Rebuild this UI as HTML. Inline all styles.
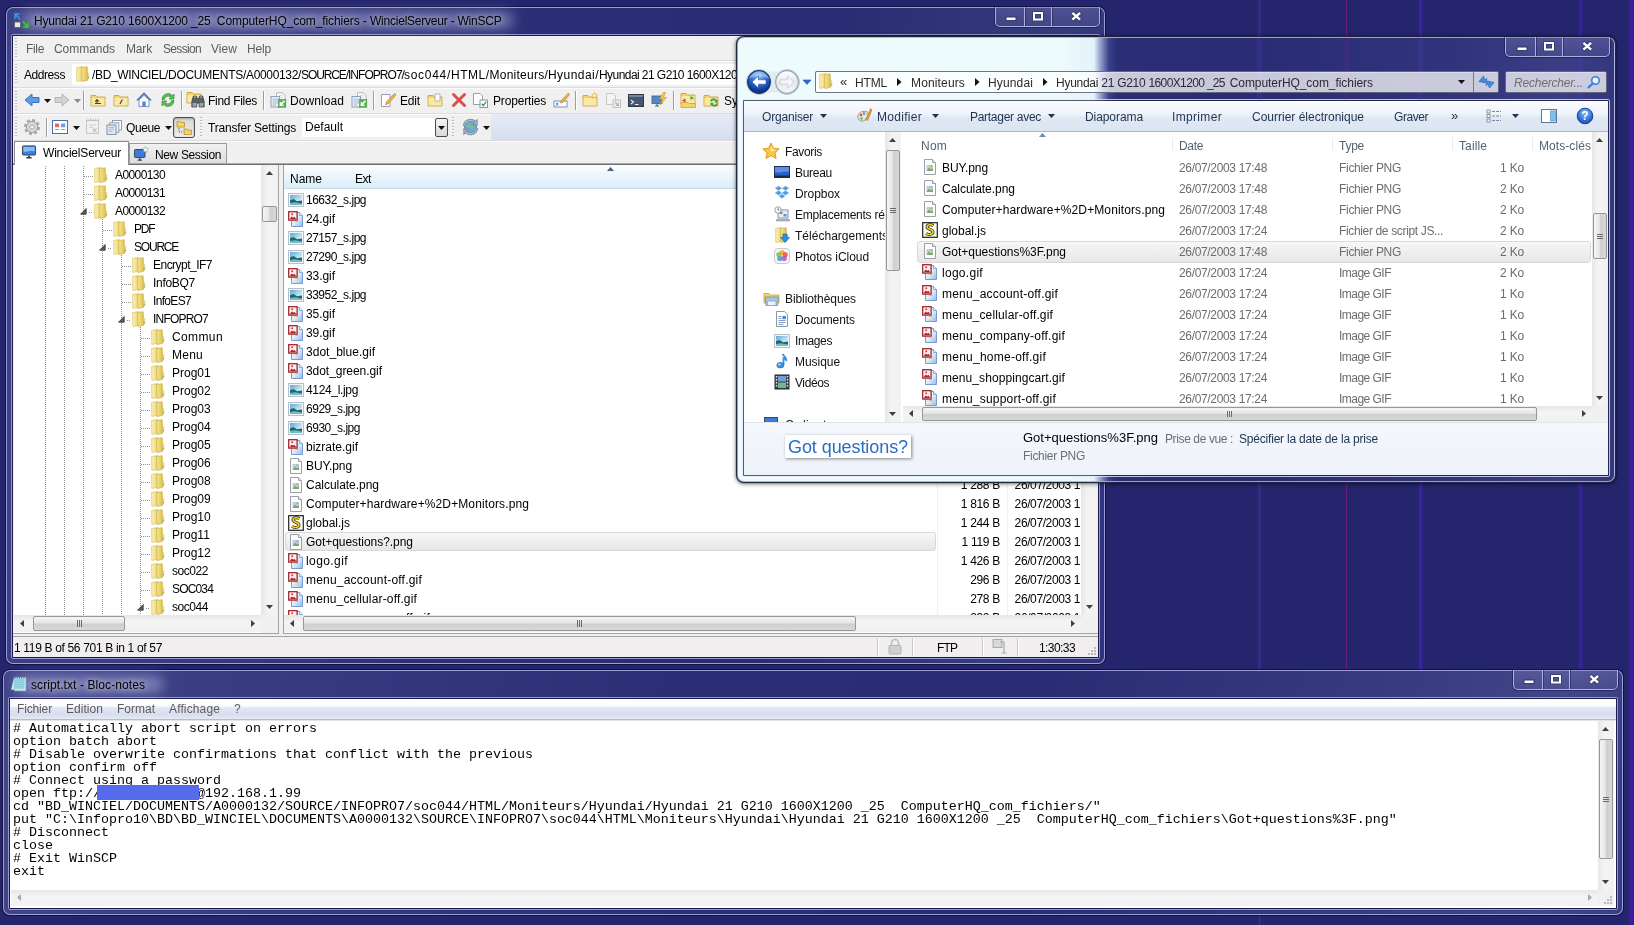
<!DOCTYPE html>
<html><head><meta charset="utf-8"><title>desktop</title><style>
html,body{margin:0;padding:0}
body{width:1634px;height:925px;overflow:hidden;position:relative;background:#24256d;font-family:"Liberation Sans",sans-serif;font-size:12px;}
div,span,svg{position:absolute;box-sizing:border-box}
.t{white-space:pre;display:block}
#root{left:0;top:0;width:1634px;height:925px;will-change:transform;overflow:hidden}
.clip{overflow:hidden}
.abs{left:0;top:0;width:1634px;height:925px}
</style></head><body><div id="root">
<div style="left:1259px;top:0px;width:1px;height:905px;background:#4526b4;"></div>
<div style="left:1346px;top:0px;width:1px;height:905px;background:#6a1f78;"></div>
<div style="left:1420px;top:0px;width:1px;height:905px;background:#4526b4;"></div>
<div style="left:1580px;top:0px;width:1px;height:905px;background:#4022a8;"></div>
<div style="left:1629px;top:0px;width:4px;height:925px;background:#3c1f9c;"></div>
<div style="left:1257px;top:0px;width:5px;height:905px;background:rgba(70,50,190,.18);"></div>
<div style="left:1418px;top:0px;width:5px;height:905px;background:rgba(70,50,190,.18);"></div>
<div style="left:1578px;top:0px;width:5px;height:905px;background:rgba(70,50,190,.18);"></div>
<div style="left:1259px;top:905px;width:1px;height:20px;background:#7a2260;"></div>
<div style="left:5px;top:6px;width:1101px;height:659px;border-radius:8px;background:#10113f;"></div>
<div style="left:6px;top:7px;width:1099px;height:657px;border-radius:7px;border:1px solid rgba(168,172,226,.88);background:linear-gradient(97deg,#3f4186 0%,#3a3c82 18%,#2c2f76 42%,#292c72 70%,#363a7e 90%,#30337a 100%);"></div>
<div style="left:11px;top:34px;width:1089px;height:625px;border-radius:2px;border:1px solid rgba(172,176,228,.8);"></div>
<div style="left:12px;top:35px;width:1087px;height:623px;border-radius:1px;background:#191a52;"></div>
<div style="left:22px;top:11px;width:492px;height:19px;border-radius:10px;background:rgba(200,204,242,.40);filter:blur(6px);"></div>
<svg style="left:13px;top:12px;" width="17" height="17" viewBox="0 0 17 17"><path d="M1 1 L7 1 L7 3 L4.5 3 L8 7 L6.5 8.3 L3 4.5 L3 7 L1 7 Z" fill="#4f8fe0" stroke="#2b5fb0" stroke-width=".6"/><path d="M16 16 L10 16 L10 14 L12.5 14 L9 10 L10.5 8.7 L14 12.5 L14 10 L16 10 Z" fill="#4fc04a" stroke="#2c8a2a" stroke-width=".6"/><rect x="1.5" y="10" width="6" height="5.5" fill="#e8e8f0" stroke="#555a70" stroke-width=".8"/><path d="M2.8 10 V8.3 a1.7 1.7 0 0 1 3.4 0 V10" fill="none" stroke="#555a70" stroke-width="1"/></svg>
<span class="t" style="top:13px;line-height:16px;font-size:12px;color:#000;letter-spacing:-0.173px;left:34px;text-shadow:0 0 6px rgba(255,255,255,.55),0 0 10px rgba(255,255,255,.4);">Hyundai 21 G210 1600X1200 _25  </span>
<span class="t" style="top:13px;line-height:16px;font-size:12px;color:#000;letter-spacing:-0.084px;left:216.8px;text-shadow:0 0 6px rgba(255,255,255,.55),0 0 10px rgba(255,255,255,.4);">ComputerHQ_com_fichiers - </span>
<span class="t" style="top:13px;line-height:16px;font-size:12px;color:#000;letter-spacing:-0.226px;left:370px;text-shadow:0 0 6px rgba(255,255,255,.55),0 0 10px rgba(255,255,255,.4);">WincielServeur - WinSCP</span>
<div style="left:995px;top:7px;width:105px;height:20px;border:1px solid rgba(190,194,235,.85);border-top:none;border-radius:0 0 5px 5px;background:linear-gradient(180deg,rgba(120,124,180,.38),rgba(95,99,160,.30));box-shadow:0 0 0 1px rgba(20,20,70,.55);"></div>
<div style="left:1024px;top:7px;width:1px;height:19px;background:rgba(190,194,235,.85);"></div>
<div style="left:1025px;top:7px;width:1px;height:19px;background:rgba(20,20,70,.45);"></div>
<div style="left:1051px;top:7px;width:1px;height:19px;background:rgba(190,194,235,.85);"></div>
<div style="left:1052px;top:7px;width:1px;height:19px;background:rgba(20,20,70,.45);"></div>
<svg style="left:1005px;top:16px;" width="13" height="6" viewBox="0 0 13 6"><rect x="1" y="1" width="10" height="3.6" fill="#fff" stroke="#33355e" stroke-width="1"/></svg>
<svg style="left:1032px;top:11px;" width="12" height="11" viewBox="0 0 12 11"><rect x="2" y="2" width="8" height="6.5" fill="none" stroke="#33355e" stroke-width="3.4"/><rect x="2" y="2" width="8" height="6.5" fill="none" stroke="#fff" stroke-width="2"/></svg>
<svg style="left:1070px;top:11px;" width="13" height="11" viewBox="0 0 13 11"><path d="M2 1.5 L10.5 9 M10.5 1.5 L2 9" stroke="#33355e" stroke-width="4" fill="none"/><path d="M2.4 1.9 L10.1 8.6 M10.1 1.9 L2.4 8.6" stroke="#fff" stroke-width="2.5" fill="none"/></svg>
<div style="left:13px;top:36px;width:1085px;height:621px;background:#f0f0f0;"></div>
<div class="clip" style="left:13px;top:36px;width:1085px;height:621px;"><div style="left:-13px;top:-36px;width:1634px;height:925px">
<div style="left:13px;top:60px;width:1085px;height:1px;background:#dcdcdc;"></div>
<div style="left:13px;top:61px;width:1085px;height:1px;background:#fbfbfb;"></div>
<div style="left:13px;top:87px;width:1085px;height:1px;background:#dcdcdc;"></div>
<div style="left:13px;top:88px;width:1085px;height:1px;background:#fbfbfb;"></div>
<div style="left:13px;top:113px;width:1085px;height:1px;background:#dcdcdc;"></div>
<div style="left:13px;top:114px;width:1085px;height:1px;background:#fbfbfb;"></div>
<div style="left:13px;top:140px;width:1085px;height:1px;background:#dcdcdc;"></div>
<div style="left:13px;top:141px;width:1085px;height:1px;background:#fbfbfb;"></div>
<div style="left:15px;top:38px;width:2px;height:20px;background:repeating-linear-gradient(180deg,#b9b9b9 0,#b9b9b9 1px,#f7f7f7 1px,#f7f7f7 2px,transparent 2px,transparent 3px);"></div>
<div style="left:15px;top:64px;width:2px;height:21px;background:repeating-linear-gradient(180deg,#b9b9b9 0,#b9b9b9 1px,#f7f7f7 1px,#f7f7f7 2px,transparent 2px,transparent 3px);"></div>
<div style="left:15px;top:91px;width:2px;height:20px;background:repeating-linear-gradient(180deg,#b9b9b9 0,#b9b9b9 1px,#f7f7f7 1px,#f7f7f7 2px,transparent 2px,transparent 3px);"></div>
<div style="left:15px;top:117px;width:2px;height:21px;background:repeating-linear-gradient(180deg,#b9b9b9 0,#b9b9b9 1px,#f7f7f7 1px,#f7f7f7 2px,transparent 2px,transparent 3px);"></div>
<div style="left:200px;top:117px;width:2px;height:21px;background:repeating-linear-gradient(180deg,#b9b9b9 0,#b9b9b9 1px,#f7f7f7 1px,#f7f7f7 2px,transparent 2px,transparent 3px);"></div>
<div style="left:452px;top:117px;width:2px;height:21px;background:repeating-linear-gradient(180deg,#b9b9b9 0,#b9b9b9 1px,#f7f7f7 1px,#f7f7f7 2px,transparent 2px,transparent 3px);"></div>
<span class="t" style="top:41px;line-height:16px;font-size:12px;color:#5c5c5c;letter-spacing:-0.336px;left:26px;">File</span>
<span class="t" style="top:41px;line-height:16px;font-size:12px;color:#5c5c5c;letter-spacing:-0.045px;left:54px;">Commands</span>
<span class="t" style="top:41px;line-height:16px;font-size:12px;color:#5c5c5c;letter-spacing:-0.168px;left:126px;">Mark</span>
<span class="t" style="top:41px;line-height:16px;font-size:12px;color:#5c5c5c;letter-spacing:-0.672px;left:163px;">Session</span>
<span class="t" style="top:41px;line-height:16px;font-size:12px;color:#5c5c5c;letter-spacing:0.051px;left:211px;">View</span>
<span class="t" style="top:41px;line-height:16px;font-size:12px;color:#5c5c5c;letter-spacing:-0.172px;left:247px;">Help</span>
<span class="t" style="top:67px;line-height:16px;font-size:12px;color:#000;letter-spacing:-0.433px;left:24px;">Address</span>
<div style="left:72px;top:64px;width:1030px;height:21px;background:#fff;"></div>
<svg style="left:75px;top:66px;" width="16" height="16" viewBox="0 0 16 16"><defs><linearGradient id="fa" x1="0" x2="1"><stop offset="0" stop-color="#fbf3c2"/><stop offset=".6" stop-color="#f2e08c"/><stop offset="1" stop-color="#e6cc62"/></linearGradient><linearGradient id="fb" x1="0" x2="1"><stop offset="0" stop-color="#f7e99e"/><stop offset=".5" stop-color="#ecd36c"/><stop offset="1" stop-color="#dcbc4c"/></linearGradient></defs><path d="M1.6 1.6 L7.4 .6 L7.6 14.4 L1.8 15.4 Z" fill="url(#fa)" stroke="#dcc45e" stroke-width=".7"/><path d="M6.6 1.4 L12.2 .8 L12.8 14.2 L7 15.6 Z" fill="url(#fb)" stroke="#cfb24a" stroke-width=".7"/><path d="M12.4 7.4 L13.8 7.8 L13.8 12.6 L12.6 12.8 Z" fill="#efe2a4" stroke="#cdb55a" stroke-width=".5"/><rect x="12.7" y="10.8" width=".9" height="1.6" fill="#6faa58"/></svg>
<span class="t" style="top:67px;line-height:16px;font-size:12px;color:#000;letter-spacing:-0.335px;left:92px;">/BD_WINCIEL/</span>
<span class="t" style="top:67px;line-height:16px;font-size:12px;color:#000;letter-spacing:-0.267px;left:168px;">DOCUMENTS/</span>
<span class="t" style="top:67px;line-height:16px;font-size:12px;color:#000;letter-spacing:-0.340px;left:246px;">A0000132/</span>
<span class="t" style="top:67px;line-height:16px;font-size:12px;color:#000;letter-spacing:-1.098px;left:301px;">SOURCE/</span>
<span class="t" style="top:67px;line-height:16px;font-size:12px;color:#000;letter-spacing:-0.965px;left:348px;">INFOPRO7/</span>
<span class="t" style="top:67px;line-height:16px;font-size:12px;color:#000;letter-spacing:0.710px;left:404px;">soc044/</span>
<span class="t" style="top:67px;line-height:16px;font-size:12px;color:#000;letter-spacing:0.500px;left:451px;">HTML/</span>
<span class="t" style="top:67px;line-height:16px;font-size:12px;color:#000;letter-spacing:0.247px;left:489.5px;">Moniteurs/</span>
<span class="t" style="top:67px;line-height:16px;font-size:12px;color:#000;letter-spacing:0.453px;left:548px;">Hyundai/</span>
<span class="t" style="top:67px;line-height:16px;font-size:12px;color:#000;letter-spacing:-0.561px;left:599px;">Hyundai 21 G210 1600X120</span>
<span class="t" style="top:67px;line-height:16px;font-size:12px;color:#000;left:737px;">0 _25  ComputerHQ_com_fichiers</span>
<svg style="left:24px;top:92px;" width="16" height="16" viewBox="0 0 16 16"><path d="M1 8 L8 2 V5.5 H15 V10.5 H8 V14 Z" fill="#5c9be6" stroke="#2f6cc0" stroke-width=".9"/></svg>
<svg style="left:44px;top:99px;" width="7" height="4" viewBox="0 0 7 4"><path d="M0 0 H7 L3.5 4 Z" fill="#111"/></svg>
<svg style="left:54px;top:92px;" width="16" height="16" viewBox="0 0 16 16"><path d="M15 8 L8 2 V5.5 H1 V10.5 H8 V14 Z" fill="#d2d2d2" stroke="#b0b0b0" stroke-width=".9"/></svg>
<svg style="left:74px;top:99px;" width="7" height="4" viewBox="0 0 7 4"><path d="M0 0 H7 L3.5 4 Z" fill="#8a8a8a"/></svg>
<div style="left:83px;top:91px;width:1px;height:19px;background:#9d9d9d;"></div>
<div style="left:84px;top:91px;width:1px;height:19px;background:#fff;"></div>
<svg style="left:90px;top:92px;" width="16" height="16" viewBox="0 0 16 16"><path d="M1 3.5 H6 L7.5 5 H15 V14 H1 Z" fill="#f3d36b" stroke="#c9a53a" stroke-width=".9"/><path d="M1.6 6 H14.4 V13.4 H1.6 Z" fill="#fae9a6"/><path d="M5 11.5 H11 M7 11.5 V8 M5.3 9.6 L7 7.6 L8.7 9.6" stroke="#444" stroke-width="1.1" fill="none"/></svg>
<svg style="left:113px;top:92px;" width="16" height="16" viewBox="0 0 16 16"><path d="M1 3.5 H6 L7.5 5 H15 V14 H1 Z" fill="#f3d36b" stroke="#c9a53a" stroke-width=".9"/><path d="M1.6 6 H14.4 V13.4 H1.6 Z" fill="#fae9a6"/><path d="M9.3 7.4 L7 12" stroke="#444" stroke-width="1.2"/></svg>
<svg style="left:136px;top:92px;" width="16" height="16" viewBox="0 0 16 16"><path d="M1 8.5 L8 1.5 L15 8.5" fill="none" stroke="#4a78b8" stroke-width="1.6"/><path d="M3 8 L8 3.3 L13 8 V14.5 H3 Z" fill="#fbfbfb" stroke="#6d8fbe" stroke-width=".9"/><rect x="6.4" y="9.5" width="3.2" height="5" fill="#4f83c8"/></svg>
<svg style="left:160px;top:92px;" width="16" height="16" viewBox="0 0 16 16"><path d="M2 7.5 A6 6 0 0 1 12.5 3.6 L14 2 V7 H9 L10.8 5.2 A3.8 3.8 0 0 0 4.4 7.5 Z" fill="#5bbf58" stroke="#2f8f33" stroke-width=".7"/><path d="M14 8.5 A6 6 0 0 1 3.5 12.4 L2 14 V9 H7 L5.2 10.8 A3.8 3.8 0 0 0 11.6 8.5 Z" fill="#5bbf58" stroke="#2f8f33" stroke-width=".7"/></svg>
<div style="left:181px;top:91px;width:1px;height:19px;background:#9d9d9d;"></div>
<div style="left:182px;top:91px;width:1px;height:19px;background:#fff;"></div>
<svg style="left:186px;top:89px;" width="16" height="16" viewBox="0 0 16 16"><path d="M1 3.5 H6 L7.5 5 H15 V14 H1 Z" fill="#f3d36b" stroke="#c9a53a" stroke-width=".9"/><path d="M1.6 6 H14.4 V13.4 H1.6 Z" fill="#fae9a6"/></svg>
<svg style="left:190px;top:93px;" width="16" height="15" viewBox="0 0 16 15"><path d="M3.4 3 h3 l.8 2.5 h1.6 l.8 -2.5 h3 l1.6 5.5 v5.5 h-5 v-4 h-2.4 v4 h-5 v-5.5 Z" fill="#5b5f66" stroke="#33363b" stroke-width=".7"/><path d="M2.6 10 h3.8 v3.4 h-3.8 Z M9.6 10 h3.8 v3.4 h-3.8 Z" fill="#9da3ab"/><path d="M4 4 h1.8 M10.2 4 h1.8" stroke="#c9ced4" stroke-width="1"/></svg>
<span class="t" style="top:93px;line-height:16px;font-size:12px;color:#000;letter-spacing:-0.302px;left:208px;">Find Files</span>
<div style="left:263px;top:91px;width:1px;height:19px;background:#9d9d9d;"></div>
<div style="left:264px;top:91px;width:1px;height:19px;background:#fff;"></div>
<svg style="left:270px;top:92px;" width="17" height="16" viewBox="0 0 17 16"><path d="M6.5 .8 H12.5 L15 3.3 V9 H6.5 Z" fill="#fff" stroke="#9aa5b2" stroke-width=".8"/><path d="M8.5 3.6 h4.5 M8.5 5.4 h4.5" stroke="#c3cad3" stroke-width=".8"/><rect x="1" y="4.5" width="8.5" height="10.5" fill="#eef3f8" stroke="#7f97b8" stroke-width=".9"/><path d="M2.6 7 h5.4 M2.6 9 h5.4 M2.6 11 h5.4 M2.6 13 h3.6" stroke="#8aa3c4" stroke-width=".8"/><rect x="8.6" y="7.6" width="7.2" height="7.6" fill="#5ab556" stroke="#3c8f3a" stroke-width=".6"/><path d="M14.6 8.8 L11 12.4 M10.4 10.2 V13.2 H13.4" fill="none" stroke="#fff" stroke-width="1.5"/></svg>
<span class="t" style="top:93px;line-height:16px;font-size:12px;color:#000;letter-spacing:0.078px;left:290px;">Download</span>
<svg style="left:351px;top:92px;" width="17" height="16" viewBox="0 0 17 16"><path d="M6.5 .8 H12.5 L15 3.3 V9 H6.5 Z" fill="#fff" stroke="#9aa5b2" stroke-width=".8"/><path d="M8.5 3.6 h4.5 M8.5 5.4 h4.5" stroke="#c3cad3" stroke-width=".8"/><rect x="1" y="4.5" width="8.5" height="10.5" fill="#eef3f8" stroke="#7f97b8" stroke-width=".9"/><path d="M2.6 7 h5.4 M2.6 9 h5.4 M2.6 11 h5.4 M2.6 13 h3.6" stroke="#8aa3c4" stroke-width=".8"/><rect x="8.6" y="7.6" width="7.2" height="7.6" fill="#5ab556" stroke="#3c8f3a" stroke-width=".6"/><path d="M14.6 8.8 L11 12.4 M10.4 10.2 V13.2 H13.4" fill="none" stroke="#fff" stroke-width="1.5"/></svg>
<div style="left:373px;top:91px;width:1px;height:19px;background:#9d9d9d;"></div>
<div style="left:374px;top:91px;width:1px;height:19px;background:#fff;"></div>
<svg style="left:380px;top:92px;" width="16" height="16" viewBox="0 0 16 16"><path d="M1.5 2.5 H10 V14.5 H1.5 Z" fill="#fff" stroke="#9aa3ad"/><path d="M14.6 1.4 L6.6 9.8 L5.6 12.6 L8.4 11.6 L15.9 3 Z" fill="#f0b64a" stroke="#b97820" stroke-width=".7"/></svg>
<span class="t" style="top:93px;line-height:16px;font-size:12px;color:#000;letter-spacing:-0.172px;left:400px;">Edit</span>
<svg style="left:427px;top:92px;" width="16" height="16" viewBox="0 0 16 16"><path d="M1 3.5 H6 L7.5 5 H15 V14 H1 Z" fill="#f3d36b" stroke="#c9a53a" stroke-width=".9"/><path d="M1.6 6 H14.4 V13.4 H1.6 Z" fill="#fae9a6"/><path d="M8 2 H13 V9 H8 Z" fill="#fff" stroke="#9aa3ad" stroke-width=".8"/></svg>
<svg style="left:451px;top:92px;" width="16" height="16" viewBox="0 0 16 16"><path d="M2.5 2.5 L13.5 13.5 M13.5 2.5 L2.5 13.5" stroke="#d9504a" stroke-width="3" stroke-linecap="round"/></svg>
<svg style="left:472px;top:92px;" width="17" height="16" viewBox="0 0 17 16"><path d="M1.5 1.5 H8 L10.5 4 V12.5 H1.5 Z" fill="#fff" stroke="#8c97a5" stroke-width=".9"/><rect x="8" y="8" width="7.5" height="7.5" fill="#fff" stroke="#7b8aa8" stroke-width=".9"/><path d="M9.6 11.8 L11.4 13.6 L14.2 9.6" fill="none" stroke="#3fa044" stroke-width="1.4"/></svg>
<span class="t" style="top:93px;line-height:16px;font-size:12px;color:#000;letter-spacing:-0.170px;left:493px;">Properties</span>
<svg style="left:553px;top:92px;" width="17" height="16" viewBox="0 0 17 16"><rect x="1" y="9" width="13" height="6" fill="#fff" stroke="#6f87b8" stroke-width=".9"/><path d="M3 10.6 L5.4 13.6 M5.4 10.6 L3 13.6" stroke="#3d6ac0" stroke-width=".9"/><path d="M15.2 1.2 L8.4 8.6 L7.6 11 L10 10.2 L16.4 2.8 Z" fill="#f0b64a" stroke="#b97820" stroke-width=".7"/></svg>
<div style="left:575px;top:91px;width:1px;height:19px;background:#9d9d9d;"></div>
<div style="left:576px;top:91px;width:1px;height:19px;background:#fff;"></div>
<svg style="left:582px;top:92px;" width="16" height="16" viewBox="0 0 16 16"><path d="M1 3.5 H6 L7.5 5 H15 V14 H1 Z" fill="#f3d36b" stroke="#c9a53a" stroke-width=".9"/><path d="M1.6 6 H14.4 V13.4 H1.6 Z" fill="#fae9a6"/><path d="M12.5 0.5 l.9 2 2 .3 -1.5 1.4 .4 2 -1.8 -1 -1.8 1 .4 -2 -1.5 -1.4 2 -.3 Z" fill="#fff7c8" stroke="#d9a520" stroke-width=".6"/></svg>
<svg style="left:605px;top:92px;" width="17" height="16" viewBox="0 0 17 16"><path d="M1.5 1.5 H8 L10.5 4 V12.5 H1.5 Z" fill="#f4f4f4" stroke="#c3c3c3" stroke-width=".9"/><rect x="8" y="8" width="7.5" height="7.5" fill="#ececec" stroke="#bdbdbd" stroke-width=".9"/><path d="M10 10 L13.5 13.5 M13.5 10.8 V13.5 H10.8" fill="none" stroke="#b5b5b5" stroke-width="1.1"/></svg>
<svg style="left:628px;top:92px;" width="16" height="16" viewBox="0 0 16 16"><rect x=".5" y="2.5" width="15" height="12" fill="#46566c" stroke="#2c3848"/><rect x="1" y="3" width="14" height="2" fill="#7286a2"/><path d="M3 8 L5.5 10 L3 12 M7 12.5 H10.5" stroke="#e8eef8" stroke-width="1.1" fill="none"/></svg>
<svg style="left:651px;top:92px;" width="17" height="16" viewBox="0 0 17 16"><rect x="1" y="4" width="10" height="7.5" fill="#4f86d0" stroke="#5a6478" stroke-width=".9"/><path d="M4 14 H8 M6 11.5 V14" stroke="#5a6478" stroke-width="1.2"/><path d="M12.5 0.5 L8.5 7 H11.5 L9 13 L15.5 5.5 H12.2 L14.6 .5 Z" fill="#f7d048" stroke="#b98a1a" stroke-width=".6"/></svg>
<div style="left:673px;top:91px;width:1px;height:19px;background:#9d9d9d;"></div>
<div style="left:674px;top:91px;width:1px;height:19px;background:#fff;"></div>
<svg style="left:680px;top:90px;" width="16" height="16" viewBox="0 0 16 16"><path d="M1 3.5 H6 L7.5 5 H15 V14 H1 Z" fill="#f3d36b" stroke="#c9a53a" stroke-width=".9"/><path d="M1.6 6 H14.4 V13.4 H1.6 Z" fill="#fae9a6"/></svg>
<svg style="left:680px;top:93px;" width="17" height="15" viewBox="0 0 17 15"><path d="M1 9.5 H8 L9 10.5 H15.5 V14.5 H1 Z" fill="#f3d36b" stroke="#c9a53a" stroke-width=".8"/><path d="M10.5 3 L14 5 L10.5 7 Z" fill="#3fa044"/><path d="M5.5 5.5 L2 7.5 L5.5 9.5 Z" fill="#d83a34"/></svg>
<svg style="left:703px;top:92px;" width="16" height="16" viewBox="0 0 16 16"><path d="M1 3.5 H6 L7.5 5 H15 V14 H1 Z" fill="#f3d36b" stroke="#c9a53a" stroke-width=".9"/><path d="M1.6 6 H14.4 V13.4 H1.6 Z" fill="#fae9a6"/><path d="M7 9 A3.6 3.6 0 0 1 13.5 8 L14.6 7 V10.4 H11.2 L12.4 9.2 A2.2 2.2 0 0 0 8.6 9.6 Z" fill="#3fa044"/><path d="M15 11.5 A3.6 3.6 0 0 1 8.5 13 L7.4 14 V10.8 H10.8 L9.6 12 A2.2 2.2 0 0 0 13.4 11.2 Z" fill="#3fa044"/></svg>
<span class="t" style="top:93px;line-height:16px;font-size:12px;color:#000;left:724px;">Synchronize</span>
<div style="left:491px;top:114px;width:607px;height:26px;background:linear-gradient(180deg,#e6ebf6,#d6deef);"></div>
<svg style="left:23px;top:118px;" width="18" height="18" viewBox="0 0 18 18"><circle cx="9" cy="9" r="6.6" fill="none" stroke="#a4aab0" stroke-width="3" stroke-dasharray="2.9 2.28"/><circle cx="9" cy="9" r="5.6" fill="#d6dade" stroke="#969ca3" stroke-width="1"/><circle cx="9" cy="9" r="2.2" fill="#f2f2f2" stroke="#969ca3" stroke-width=".9"/></svg>
<div style="left:46px;top:118px;width:1px;height:19px;background:#9d9d9d;"></div>
<div style="left:47px;top:118px;width:1px;height:19px;background:#fff;"></div>
<svg style="left:52px;top:119px;" width="17" height="16" viewBox="0 0 17 16"><rect x=".5" y="1.5" width="15" height="13" fill="#fff" stroke="#4f6ea8"/><rect x="3" y="4.6" width="4.2" height="3.6" fill="#de6a64"/><rect x="9" y="4.6" width="4.2" height="3.6" fill="#6a9be0"/><path d="M3 10.5 h4.2 M9 10.5 h4.2" stroke="#8da2c8" stroke-width="1.2"/></svg>
<svg style="left:73px;top:126px;" width="7" height="4" viewBox="0 0 7 4"><path d="M0 0 H7 L3.5 4 Z" fill="#111"/></svg>
<svg style="left:85px;top:118px;" width="15" height="17" viewBox="0 0 15 17"><rect x="1.5" y="2.5" width="12" height="13" fill="#f1f1f1" stroke="#c4c4c4"/><path d="M3 2.5 v-2 M5.5 2.5 v-2 M8 2.5 v-2 M10.5 2.5 v-2 M13 2.5 v-2" stroke="#bdbdbd" stroke-width=".8"/><path d="M4 7 h7 M4 9.5 h4" stroke="#cfcfcf" stroke-width="1"/><path d="M8 10.5 L11.5 14 M11.5 10.5 L8 14" stroke="#c2c2c2" stroke-width="1.3"/></svg>
<svg style="left:106px;top:119px;" width="17" height="16" viewBox="0 0 17 16"><rect x="6.5" y="1.5" width="9" height="9.5" fill="#fff" stroke="#8796ad" stroke-width=".9"/><rect x="3.8" y="3.8" width="9" height="9.5" fill="#f2f5f9" stroke="#8796ad" stroke-width=".9"/><rect x="1" y="6" width="9" height="9.5" fill="#e3e9f1" stroke="#7a8aa3" stroke-width=".9"/><path d="M2.6 8.4 h5.6 M2.6 10.4 h5.6 M2.6 12.4 h4" stroke="#98a6b9" stroke-width=".7"/></svg>
<span class="t" style="top:120px;line-height:16px;font-size:12px;color:#000;letter-spacing:-0.406px;left:126px;">Queue</span>
<svg style="left:165px;top:126px;" width="7" height="4" viewBox="0 0 7 4"><path d="M0 0 H7 L3.5 4 Z" fill="#111"/></svg>
<div style="left:173px;top:117px;width:22px;height:21px;border:1px solid #4d4d4d;border-radius:3px;background:linear-gradient(180deg,#d8d8d8,#ececec);box-shadow:inset 0 1px 2px rgba(0,0,0,.25);"></div>
<svg style="left:176px;top:119px;" width="17" height="17" viewBox="0 0 17 17"><path d="M1 2.5 H4 L5 3.5 H8.5 V8 H1 Z" fill="#f3d36b" stroke="#b9932a" stroke-width=".8"/><path d="M8 10 H11 L12 11 H15.5 V15.5 H8 Z" fill="#f3d36b" stroke="#b9932a" stroke-width=".8"/><path d="M3 9 V13 H7" fill="none" stroke="#555" stroke-width=".9" stroke-dasharray="1 1"/></svg>
<span class="t" style="top:120px;line-height:16px;font-size:12px;color:#000;letter-spacing:-0.173px;left:208px;">Transfer Settings</span>
<div style="left:302px;top:118px;width:146px;height:19px;background:#fff;"></div>
<span class="t" style="top:119px;line-height:16px;font-size:12px;color:#000;letter-spacing:-0.004px;left:305px;">Default</span>
<div style="left:435px;top:118px;width:13px;height:19px;border:1px solid #4a4a4a;border-radius:2px;background:linear-gradient(180deg,#f4f4f4,#d9d9d9);"></div>
<svg style="left:438px;top:126px;" width="7" height="4" viewBox="0 0 7 4"><path d="M0 0 H7 L3.5 4 Z" fill="#111"/></svg>
<svg style="left:462px;top:118px;" width="18" height="18" viewBox="0 0 18 18"><circle cx="8.5" cy="9" r="6" fill="#6fa8dc" stroke="#4d7eb5" stroke-width=".8"/><path d="M4.5 6.5 C6.5 5 8 7.5 10 6.5 C12 5.5 12.5 8.5 11 10 C9.5 11.5 7 10 5.5 12" fill="#7cc47a" stroke="none" opacity=".85"/><path d="M1.5 8 A7 7 0 0 1 13.5 3.6 L15 2.2 V7 H10.4 L12 5.4" fill="none" stroke="#8a96a6" stroke-width="1.5"/><path d="M15.5 10 A7 7 0 0 1 3.5 14.4 L2 15.8 V11 H6.6 L5 12.6" fill="none" stroke="#8a96a6" stroke-width="1.5"/></svg>
<svg style="left:483px;top:126px;" width="7" height="4" viewBox="0 0 7 4"><path d="M0 0 H7 L3.5 4 Z" fill="#111"/></svg>
<div style="left:13px;top:163px;width:1085px;height:1px;background:#a9a9a9;"></div>
<div style="left:13px;top:164px;width:1085px;height:1px;background:#6f6f6f;"></div>
<div style="left:14px;top:141px;width:115px;height:24px;background:#fff;border:1px solid #8e8e8e;border-bottom:none;"></div>
<svg style="left:21px;top:145px;" width="16" height="14" viewBox="0 0 18 16"><rect x="1.5" y="1" width="15" height="10.5" rx="1" fill="#3f7fdc" stroke="#3a4454" stroke-width="1.1"/><path d="M2.6 2.2 H15.4 V7.5 C10 5 7 9 2.6 7.5 Z" fill="#8cbcf2"/><path d="M6 14.5 H12 M9 12 V14.5" stroke="#2d3646" stroke-width="1.8"/></svg>
<span class="t" style="top:145px;line-height:16px;font-size:12px;color:#000;letter-spacing:-0.193px;left:43px;">WincielServeur</span>
<div style="left:129px;top:143px;width:98px;height:20px;background:linear-gradient(180deg,#f1f1f1,#dedede);border:1px solid #9a9a9a;border-bottom:none;"></div>
<svg style="left:133px;top:146px;" width="17" height="15" viewBox="0 0 19 17"><rect x="1.5" y="4" width="12" height="9" rx="1" fill="#3f7ad6" stroke="#3a4558" stroke-width="1.1"/><path d="M5 16 H10 M7.5 13 V16" stroke="#3a4558" stroke-width="1.6"/><path d="M14 0.5 l1 2.3 2.4 .3 -1.8 1.6 .5 2.4 -2.1 -1.2 -2.1 1.2 .5 -2.4 -1.8 -1.6 2.4 -.3 Z" fill="#fff" stroke="#8a93a6" stroke-width=".6"/></svg>
<span class="t" style="top:147px;line-height:16px;font-size:12px;color:#000;letter-spacing:-0.366px;left:155px;">New Session</span>
</div></div>
<div style="left:14px;top:165px;width:265px;height:468px;background:#fff;"></div>
<div class="clip" style="left:14px;top:165px;width:246px;height:450px;"><div style="left:-14px;top:-165px;width:1634px;height:925px">
<div style="left:45px;top:166px;width:1px;height:449px;background:repeating-linear-gradient(180deg,#8f8f8f 0,#8f8f8f 1px,transparent 1px,transparent 2px);"></div>
<div style="left:64px;top:166px;width:1px;height:449px;background:repeating-linear-gradient(180deg,#8f8f8f 0,#8f8f8f 1px,transparent 1px,transparent 2px);"></div>
<div style="left:83px;top:166px;width:1px;height:449px;background:repeating-linear-gradient(180deg,#8f8f8f 0,#8f8f8f 1px,transparent 1px,transparent 2px);"></div>
<div style="left:102px;top:219px;width:1px;height:396px;background:repeating-linear-gradient(180deg,#8f8f8f 0,#8f8f8f 1px,transparent 1px,transparent 2px);"></div>
<div style="left:121px;top:255px;width:1px;height:360px;background:repeating-linear-gradient(180deg,#8f8f8f 0,#8f8f8f 1px,transparent 1px,transparent 2px);"></div>
<div style="left:140px;top:327px;width:1px;height:288px;background:repeating-linear-gradient(180deg,#8f8f8f 0,#8f8f8f 1px,transparent 1px,transparent 2px);"></div>
<div style="left:84px;top:176px;width:9px;height:1px;background:repeating-linear-gradient(90deg,#8f8f8f 0,#8f8f8f 1px,transparent 1px,transparent 2px);"></div>
<svg style="left:93px;top:167px;" width="16" height="16" viewBox="0 0 16 16"><defs><linearGradient id="fa" x1="0" x2="1"><stop offset="0" stop-color="#fbf3c2"/><stop offset=".6" stop-color="#f2e08c"/><stop offset="1" stop-color="#e6cc62"/></linearGradient><linearGradient id="fb" x1="0" x2="1"><stop offset="0" stop-color="#f7e99e"/><stop offset=".5" stop-color="#ecd36c"/><stop offset="1" stop-color="#dcbc4c"/></linearGradient></defs><path d="M1.6 1.6 L7.4 .6 L7.6 14.4 L1.8 15.4 Z" fill="url(#fa)" stroke="#dcc45e" stroke-width=".7"/><path d="M6.6 1.4 L12.2 .8 L12.8 14.2 L7 15.6 Z" fill="url(#fb)" stroke="#cfb24a" stroke-width=".7"/><path d="M12.4 7.4 L13.8 7.8 L13.8 12.6 L12.6 12.8 Z" fill="#efe2a4" stroke="#cdb55a" stroke-width=".5"/><rect x="12.7" y="10.8" width=".9" height="1.6" fill="#6faa58"/></svg>
<span class="t" style="top:167px;line-height:16px;font-size:12px;color:#000;letter-spacing:-0.592px;left:115px;">A0000130</span>
<div style="left:84px;top:194px;width:9px;height:1px;background:repeating-linear-gradient(90deg,#8f8f8f 0,#8f8f8f 1px,transparent 1px,transparent 2px);"></div>
<svg style="left:93px;top:185px;" width="16" height="16" viewBox="0 0 16 16"><defs><linearGradient id="fa" x1="0" x2="1"><stop offset="0" stop-color="#fbf3c2"/><stop offset=".6" stop-color="#f2e08c"/><stop offset="1" stop-color="#e6cc62"/></linearGradient><linearGradient id="fb" x1="0" x2="1"><stop offset="0" stop-color="#f7e99e"/><stop offset=".5" stop-color="#ecd36c"/><stop offset="1" stop-color="#dcbc4c"/></linearGradient></defs><path d="M1.6 1.6 L7.4 .6 L7.6 14.4 L1.8 15.4 Z" fill="url(#fa)" stroke="#dcc45e" stroke-width=".7"/><path d="M6.6 1.4 L12.2 .8 L12.8 14.2 L7 15.6 Z" fill="url(#fb)" stroke="#cfb24a" stroke-width=".7"/><path d="M12.4 7.4 L13.8 7.8 L13.8 12.6 L12.6 12.8 Z" fill="#efe2a4" stroke="#cdb55a" stroke-width=".5"/><rect x="12.7" y="10.8" width=".9" height="1.6" fill="#6faa58"/></svg>
<span class="t" style="top:185px;line-height:16px;font-size:12px;color:#000;letter-spacing:-0.592px;left:115px;">A0000131</span>
<svg style="left:80px;top:208px;" width="7" height="7" viewBox="0 0 7 7"><path d="M6.2 .5 V6.2 H.5 Z" fill="#5a5a5a" stroke="#222" stroke-width=".7"/></svg>
<div style="left:89px;top:212px;width:4px;height:1px;background:repeating-linear-gradient(90deg,#8f8f8f 0,#8f8f8f 1px,transparent 1px,transparent 2px);"></div>
<svg style="left:93px;top:203px;" width="16" height="16" viewBox="0 0 16 16"><defs><linearGradient id="fa" x1="0" x2="1"><stop offset="0" stop-color="#fbf3c2"/><stop offset=".6" stop-color="#f2e08c"/><stop offset="1" stop-color="#e6cc62"/></linearGradient><linearGradient id="fb" x1="0" x2="1"><stop offset="0" stop-color="#f7e99e"/><stop offset=".5" stop-color="#ecd36c"/><stop offset="1" stop-color="#dcbc4c"/></linearGradient></defs><path d="M1.6 1.6 L7.4 .6 L7.6 14.4 L1.8 15.4 Z" fill="url(#fa)" stroke="#dcc45e" stroke-width=".7"/><path d="M6.6 1.4 L12.2 .8 L12.8 14.2 L7 15.6 Z" fill="url(#fb)" stroke="#cfb24a" stroke-width=".7"/><path d="M12.4 7.4 L13.8 7.8 L13.8 12.6 L12.6 12.8 Z" fill="#efe2a4" stroke="#cdb55a" stroke-width=".5"/><rect x="12.7" y="10.8" width=".9" height="1.6" fill="#6faa58"/></svg>
<span class="t" style="top:203px;line-height:16px;font-size:12px;color:#000;letter-spacing:-0.592px;left:115px;">A0000132</span>
<div style="left:103px;top:230px;width:9px;height:1px;background:repeating-linear-gradient(90deg,#8f8f8f 0,#8f8f8f 1px,transparent 1px,transparent 2px);"></div>
<svg style="left:112px;top:221px;" width="16" height="16" viewBox="0 0 16 16"><defs><linearGradient id="fa" x1="0" x2="1"><stop offset="0" stop-color="#fbf3c2"/><stop offset=".6" stop-color="#f2e08c"/><stop offset="1" stop-color="#e6cc62"/></linearGradient><linearGradient id="fb" x1="0" x2="1"><stop offset="0" stop-color="#f7e99e"/><stop offset=".5" stop-color="#ecd36c"/><stop offset="1" stop-color="#dcbc4c"/></linearGradient></defs><path d="M1.6 1.6 L7.4 .6 L7.6 14.4 L1.8 15.4 Z" fill="url(#fa)" stroke="#dcc45e" stroke-width=".7"/><path d="M6.6 1.4 L12.2 .8 L12.8 14.2 L7 15.6 Z" fill="url(#fb)" stroke="#cfb24a" stroke-width=".7"/><path d="M12.4 7.4 L13.8 7.8 L13.8 12.6 L12.6 12.8 Z" fill="#efe2a4" stroke="#cdb55a" stroke-width=".5"/><rect x="12.7" y="10.8" width=".9" height="1.6" fill="#6faa58"/></svg>
<span class="t" style="top:221px;line-height:16px;font-size:12px;color:#000;letter-spacing:-1.200px;left:134px;">PDF</span>
<svg style="left:99px;top:244px;" width="7" height="7" viewBox="0 0 7 7"><path d="M6.2 .5 V6.2 H.5 Z" fill="#5a5a5a" stroke="#222" stroke-width=".7"/></svg>
<div style="left:108px;top:248px;width:4px;height:1px;background:repeating-linear-gradient(90deg,#8f8f8f 0,#8f8f8f 1px,transparent 1px,transparent 2px);"></div>
<svg style="left:112px;top:239px;" width="16" height="16" viewBox="0 0 16 16"><defs><linearGradient id="fa" x1="0" x2="1"><stop offset="0" stop-color="#fbf3c2"/><stop offset=".6" stop-color="#f2e08c"/><stop offset="1" stop-color="#e6cc62"/></linearGradient><linearGradient id="fb" x1="0" x2="1"><stop offset="0" stop-color="#f7e99e"/><stop offset=".5" stop-color="#ecd36c"/><stop offset="1" stop-color="#dcbc4c"/></linearGradient></defs><path d="M1.6 1.6 L7.4 .6 L7.6 14.4 L1.8 15.4 Z" fill="url(#fa)" stroke="#dcc45e" stroke-width=".7"/><path d="M6.6 1.4 L12.2 .8 L12.8 14.2 L7 15.6 Z" fill="url(#fb)" stroke="#cfb24a" stroke-width=".7"/><path d="M12.4 7.4 L13.8 7.8 L13.8 12.6 L12.6 12.8 Z" fill="#efe2a4" stroke="#cdb55a" stroke-width=".5"/><rect x="12.7" y="10.8" width=".9" height="1.6" fill="#6faa58"/></svg>
<span class="t" style="top:239px;line-height:16px;font-size:12px;color:#000;letter-spacing:-1.200px;left:134px;">SOURCE</span>
<div style="left:122px;top:266px;width:9px;height:1px;background:repeating-linear-gradient(90deg,#8f8f8f 0,#8f8f8f 1px,transparent 1px,transparent 2px);"></div>
<svg style="left:131px;top:257px;" width="16" height="16" viewBox="0 0 16 16"><defs><linearGradient id="fa" x1="0" x2="1"><stop offset="0" stop-color="#fbf3c2"/><stop offset=".6" stop-color="#f2e08c"/><stop offset="1" stop-color="#e6cc62"/></linearGradient><linearGradient id="fb" x1="0" x2="1"><stop offset="0" stop-color="#f7e99e"/><stop offset=".5" stop-color="#ecd36c"/><stop offset="1" stop-color="#dcbc4c"/></linearGradient></defs><path d="M1.6 1.6 L7.4 .6 L7.6 14.4 L1.8 15.4 Z" fill="url(#fa)" stroke="#dcc45e" stroke-width=".7"/><path d="M6.6 1.4 L12.2 .8 L12.8 14.2 L7 15.6 Z" fill="url(#fb)" stroke="#cfb24a" stroke-width=".7"/><path d="M12.4 7.4 L13.8 7.8 L13.8 12.6 L12.6 12.8 Z" fill="#efe2a4" stroke="#cdb55a" stroke-width=".5"/><rect x="12.7" y="10.8" width=".9" height="1.6" fill="#6faa58"/></svg>
<span class="t" style="top:257px;line-height:16px;font-size:12px;color:#000;letter-spacing:-0.518px;left:153px;">Encrypt_IF7</span>
<div style="left:122px;top:284px;width:9px;height:1px;background:repeating-linear-gradient(90deg,#8f8f8f 0,#8f8f8f 1px,transparent 1px,transparent 2px);"></div>
<svg style="left:131px;top:275px;" width="16" height="16" viewBox="0 0 16 16"><defs><linearGradient id="fa" x1="0" x2="1"><stop offset="0" stop-color="#fbf3c2"/><stop offset=".6" stop-color="#f2e08c"/><stop offset="1" stop-color="#e6cc62"/></linearGradient><linearGradient id="fb" x1="0" x2="1"><stop offset="0" stop-color="#f7e99e"/><stop offset=".5" stop-color="#ecd36c"/><stop offset="1" stop-color="#dcbc4c"/></linearGradient></defs><path d="M1.6 1.6 L7.4 .6 L7.6 14.4 L1.8 15.4 Z" fill="url(#fa)" stroke="#dcc45e" stroke-width=".7"/><path d="M6.6 1.4 L12.2 .8 L12.8 14.2 L7 15.6 Z" fill="url(#fb)" stroke="#cfb24a" stroke-width=".7"/><path d="M12.4 7.4 L13.8 7.8 L13.8 12.6 L12.6 12.8 Z" fill="#efe2a4" stroke="#cdb55a" stroke-width=".5"/><rect x="12.7" y="10.8" width=".9" height="1.6" fill="#6faa58"/></svg>
<span class="t" style="top:275px;line-height:16px;font-size:12px;color:#000;letter-spacing:-0.290px;left:153px;">InfoBQ7</span>
<div style="left:122px;top:302px;width:9px;height:1px;background:repeating-linear-gradient(90deg,#8f8f8f 0,#8f8f8f 1px,transparent 1px,transparent 2px);"></div>
<svg style="left:131px;top:293px;" width="16" height="16" viewBox="0 0 16 16"><defs><linearGradient id="fa" x1="0" x2="1"><stop offset="0" stop-color="#fbf3c2"/><stop offset=".6" stop-color="#f2e08c"/><stop offset="1" stop-color="#e6cc62"/></linearGradient><linearGradient id="fb" x1="0" x2="1"><stop offset="0" stop-color="#f7e99e"/><stop offset=".5" stop-color="#ecd36c"/><stop offset="1" stop-color="#dcbc4c"/></linearGradient></defs><path d="M1.6 1.6 L7.4 .6 L7.6 14.4 L1.8 15.4 Z" fill="url(#fa)" stroke="#dcc45e" stroke-width=".7"/><path d="M6.6 1.4 L12.2 .8 L12.8 14.2 L7 15.6 Z" fill="url(#fb)" stroke="#cfb24a" stroke-width=".7"/><path d="M12.4 7.4 L13.8 7.8 L13.8 12.6 L12.6 12.8 Z" fill="#efe2a4" stroke="#cdb55a" stroke-width=".5"/><rect x="12.7" y="10.8" width=".9" height="1.6" fill="#6faa58"/></svg>
<span class="t" style="top:293px;line-height:16px;font-size:12px;color:#000;letter-spacing:-0.672px;left:153px;">InfoES7</span>
<svg style="left:118px;top:316px;" width="7" height="7" viewBox="0 0 7 7"><path d="M6.2 .5 V6.2 H.5 Z" fill="#5a5a5a" stroke="#222" stroke-width=".7"/></svg>
<div style="left:127px;top:320px;width:4px;height:1px;background:repeating-linear-gradient(90deg,#8f8f8f 0,#8f8f8f 1px,transparent 1px,transparent 2px);"></div>
<svg style="left:131px;top:311px;" width="16" height="16" viewBox="0 0 16 16"><defs><linearGradient id="fa" x1="0" x2="1"><stop offset="0" stop-color="#fbf3c2"/><stop offset=".6" stop-color="#f2e08c"/><stop offset="1" stop-color="#e6cc62"/></linearGradient><linearGradient id="fb" x1="0" x2="1"><stop offset="0" stop-color="#f7e99e"/><stop offset=".5" stop-color="#ecd36c"/><stop offset="1" stop-color="#dcbc4c"/></linearGradient></defs><path d="M1.6 1.6 L7.4 .6 L7.6 14.4 L1.8 15.4 Z" fill="url(#fa)" stroke="#dcc45e" stroke-width=".7"/><path d="M6.6 1.4 L12.2 .8 L12.8 14.2 L7 15.6 Z" fill="url(#fb)" stroke="#cfb24a" stroke-width=".7"/><path d="M12.4 7.4 L13.8 7.8 L13.8 12.6 L12.6 12.8 Z" fill="#efe2a4" stroke="#cdb55a" stroke-width=".5"/><rect x="12.7" y="10.8" width=".9" height="1.6" fill="#6faa58"/></svg>
<span class="t" style="top:311px;line-height:16px;font-size:12px;color:#000;letter-spacing:-0.793px;left:153px;">INFOPRO7</span>
<div style="left:141px;top:338px;width:9px;height:1px;background:repeating-linear-gradient(90deg,#8f8f8f 0,#8f8f8f 1px,transparent 1px,transparent 2px);"></div>
<svg style="left:150px;top:329px;" width="16" height="16" viewBox="0 0 16 16"><defs><linearGradient id="fa" x1="0" x2="1"><stop offset="0" stop-color="#fbf3c2"/><stop offset=".6" stop-color="#f2e08c"/><stop offset="1" stop-color="#e6cc62"/></linearGradient><linearGradient id="fb" x1="0" x2="1"><stop offset="0" stop-color="#f7e99e"/><stop offset=".5" stop-color="#ecd36c"/><stop offset="1" stop-color="#dcbc4c"/></linearGradient></defs><path d="M1.6 1.6 L7.4 .6 L7.6 14.4 L1.8 15.4 Z" fill="url(#fa)" stroke="#dcc45e" stroke-width=".7"/><path d="M6.6 1.4 L12.2 .8 L12.8 14.2 L7 15.6 Z" fill="url(#fb)" stroke="#cfb24a" stroke-width=".7"/><path d="M12.4 7.4 L13.8 7.8 L13.8 12.6 L12.6 12.8 Z" fill="#efe2a4" stroke="#cdb55a" stroke-width=".5"/><rect x="12.7" y="10.8" width=".9" height="1.6" fill="#6faa58"/></svg>
<span class="t" style="top:329px;line-height:16px;font-size:12px;color:#000;letter-spacing:0.385px;left:172px;">Commun</span>
<div style="left:141px;top:356px;width:9px;height:1px;background:repeating-linear-gradient(90deg,#8f8f8f 0,#8f8f8f 1px,transparent 1px,transparent 2px);"></div>
<svg style="left:150px;top:347px;" width="16" height="16" viewBox="0 0 16 16"><defs><linearGradient id="fa" x1="0" x2="1"><stop offset="0" stop-color="#fbf3c2"/><stop offset=".6" stop-color="#f2e08c"/><stop offset="1" stop-color="#e6cc62"/></linearGradient><linearGradient id="fb" x1="0" x2="1"><stop offset="0" stop-color="#f7e99e"/><stop offset=".5" stop-color="#ecd36c"/><stop offset="1" stop-color="#dcbc4c"/></linearGradient></defs><path d="M1.6 1.6 L7.4 .6 L7.6 14.4 L1.8 15.4 Z" fill="url(#fa)" stroke="#dcc45e" stroke-width=".7"/><path d="M6.6 1.4 L12.2 .8 L12.8 14.2 L7 15.6 Z" fill="url(#fb)" stroke="#cfb24a" stroke-width=".7"/><path d="M12.4 7.4 L13.8 7.8 L13.8 12.6 L12.6 12.8 Z" fill="#efe2a4" stroke="#cdb55a" stroke-width=".5"/><rect x="12.7" y="10.8" width=".9" height="1.6" fill="#6faa58"/></svg>
<span class="t" style="top:347px;line-height:16px;font-size:12px;color:#000;letter-spacing:0.242px;left:172px;">Menu</span>
<div style="left:141px;top:374px;width:9px;height:1px;background:repeating-linear-gradient(90deg,#8f8f8f 0,#8f8f8f 1px,transparent 1px,transparent 2px);"></div>
<svg style="left:150px;top:365px;" width="16" height="16" viewBox="0 0 16 16"><defs><linearGradient id="fa" x1="0" x2="1"><stop offset="0" stop-color="#fbf3c2"/><stop offset=".6" stop-color="#f2e08c"/><stop offset="1" stop-color="#e6cc62"/></linearGradient><linearGradient id="fb" x1="0" x2="1"><stop offset="0" stop-color="#f7e99e"/><stop offset=".5" stop-color="#ecd36c"/><stop offset="1" stop-color="#dcbc4c"/></linearGradient></defs><path d="M1.6 1.6 L7.4 .6 L7.6 14.4 L1.8 15.4 Z" fill="url(#fa)" stroke="#dcc45e" stroke-width=".7"/><path d="M6.6 1.4 L12.2 .8 L12.8 14.2 L7 15.6 Z" fill="url(#fb)" stroke="#cfb24a" stroke-width=".7"/><path d="M12.4 7.4 L13.8 7.8 L13.8 12.6 L12.6 12.8 Z" fill="#efe2a4" stroke="#cdb55a" stroke-width=".5"/><rect x="12.7" y="10.8" width=".9" height="1.6" fill="#6faa58"/></svg>
<span class="t" style="top:365px;line-height:16px;font-size:12px;color:#000;left:172px;">Prog01</span>
<div style="left:141px;top:392px;width:9px;height:1px;background:repeating-linear-gradient(90deg,#8f8f8f 0,#8f8f8f 1px,transparent 1px,transparent 2px);"></div>
<svg style="left:150px;top:383px;" width="16" height="16" viewBox="0 0 16 16"><defs><linearGradient id="fa" x1="0" x2="1"><stop offset="0" stop-color="#fbf3c2"/><stop offset=".6" stop-color="#f2e08c"/><stop offset="1" stop-color="#e6cc62"/></linearGradient><linearGradient id="fb" x1="0" x2="1"><stop offset="0" stop-color="#f7e99e"/><stop offset=".5" stop-color="#ecd36c"/><stop offset="1" stop-color="#dcbc4c"/></linearGradient></defs><path d="M1.6 1.6 L7.4 .6 L7.6 14.4 L1.8 15.4 Z" fill="url(#fa)" stroke="#dcc45e" stroke-width=".7"/><path d="M6.6 1.4 L12.2 .8 L12.8 14.2 L7 15.6 Z" fill="url(#fb)" stroke="#cfb24a" stroke-width=".7"/><path d="M12.4 7.4 L13.8 7.8 L13.8 12.6 L12.6 12.8 Z" fill="#efe2a4" stroke="#cdb55a" stroke-width=".5"/><rect x="12.7" y="10.8" width=".9" height="1.6" fill="#6faa58"/></svg>
<span class="t" style="top:383px;line-height:16px;font-size:12px;color:#000;left:172px;">Prog02</span>
<div style="left:141px;top:410px;width:9px;height:1px;background:repeating-linear-gradient(90deg,#8f8f8f 0,#8f8f8f 1px,transparent 1px,transparent 2px);"></div>
<svg style="left:150px;top:401px;" width="16" height="16" viewBox="0 0 16 16"><defs><linearGradient id="fa" x1="0" x2="1"><stop offset="0" stop-color="#fbf3c2"/><stop offset=".6" stop-color="#f2e08c"/><stop offset="1" stop-color="#e6cc62"/></linearGradient><linearGradient id="fb" x1="0" x2="1"><stop offset="0" stop-color="#f7e99e"/><stop offset=".5" stop-color="#ecd36c"/><stop offset="1" stop-color="#dcbc4c"/></linearGradient></defs><path d="M1.6 1.6 L7.4 .6 L7.6 14.4 L1.8 15.4 Z" fill="url(#fa)" stroke="#dcc45e" stroke-width=".7"/><path d="M6.6 1.4 L12.2 .8 L12.8 14.2 L7 15.6 Z" fill="url(#fb)" stroke="#cfb24a" stroke-width=".7"/><path d="M12.4 7.4 L13.8 7.8 L13.8 12.6 L12.6 12.8 Z" fill="#efe2a4" stroke="#cdb55a" stroke-width=".5"/><rect x="12.7" y="10.8" width=".9" height="1.6" fill="#6faa58"/></svg>
<span class="t" style="top:401px;line-height:16px;font-size:12px;color:#000;left:172px;">Prog03</span>
<div style="left:141px;top:428px;width:9px;height:1px;background:repeating-linear-gradient(90deg,#8f8f8f 0,#8f8f8f 1px,transparent 1px,transparent 2px);"></div>
<svg style="left:150px;top:419px;" width="16" height="16" viewBox="0 0 16 16"><defs><linearGradient id="fa" x1="0" x2="1"><stop offset="0" stop-color="#fbf3c2"/><stop offset=".6" stop-color="#f2e08c"/><stop offset="1" stop-color="#e6cc62"/></linearGradient><linearGradient id="fb" x1="0" x2="1"><stop offset="0" stop-color="#f7e99e"/><stop offset=".5" stop-color="#ecd36c"/><stop offset="1" stop-color="#dcbc4c"/></linearGradient></defs><path d="M1.6 1.6 L7.4 .6 L7.6 14.4 L1.8 15.4 Z" fill="url(#fa)" stroke="#dcc45e" stroke-width=".7"/><path d="M6.6 1.4 L12.2 .8 L12.8 14.2 L7 15.6 Z" fill="url(#fb)" stroke="#cfb24a" stroke-width=".7"/><path d="M12.4 7.4 L13.8 7.8 L13.8 12.6 L12.6 12.8 Z" fill="#efe2a4" stroke="#cdb55a" stroke-width=".5"/><rect x="12.7" y="10.8" width=".9" height="1.6" fill="#6faa58"/></svg>
<span class="t" style="top:419px;line-height:16px;font-size:12px;color:#000;left:172px;">Prog04</span>
<div style="left:141px;top:446px;width:9px;height:1px;background:repeating-linear-gradient(90deg,#8f8f8f 0,#8f8f8f 1px,transparent 1px,transparent 2px);"></div>
<svg style="left:150px;top:437px;" width="16" height="16" viewBox="0 0 16 16"><defs><linearGradient id="fa" x1="0" x2="1"><stop offset="0" stop-color="#fbf3c2"/><stop offset=".6" stop-color="#f2e08c"/><stop offset="1" stop-color="#e6cc62"/></linearGradient><linearGradient id="fb" x1="0" x2="1"><stop offset="0" stop-color="#f7e99e"/><stop offset=".5" stop-color="#ecd36c"/><stop offset="1" stop-color="#dcbc4c"/></linearGradient></defs><path d="M1.6 1.6 L7.4 .6 L7.6 14.4 L1.8 15.4 Z" fill="url(#fa)" stroke="#dcc45e" stroke-width=".7"/><path d="M6.6 1.4 L12.2 .8 L12.8 14.2 L7 15.6 Z" fill="url(#fb)" stroke="#cfb24a" stroke-width=".7"/><path d="M12.4 7.4 L13.8 7.8 L13.8 12.6 L12.6 12.8 Z" fill="#efe2a4" stroke="#cdb55a" stroke-width=".5"/><rect x="12.7" y="10.8" width=".9" height="1.6" fill="#6faa58"/></svg>
<span class="t" style="top:437px;line-height:16px;font-size:12px;color:#000;left:172px;">Prog05</span>
<div style="left:141px;top:464px;width:9px;height:1px;background:repeating-linear-gradient(90deg,#8f8f8f 0,#8f8f8f 1px,transparent 1px,transparent 2px);"></div>
<svg style="left:150px;top:455px;" width="16" height="16" viewBox="0 0 16 16"><defs><linearGradient id="fa" x1="0" x2="1"><stop offset="0" stop-color="#fbf3c2"/><stop offset=".6" stop-color="#f2e08c"/><stop offset="1" stop-color="#e6cc62"/></linearGradient><linearGradient id="fb" x1="0" x2="1"><stop offset="0" stop-color="#f7e99e"/><stop offset=".5" stop-color="#ecd36c"/><stop offset="1" stop-color="#dcbc4c"/></linearGradient></defs><path d="M1.6 1.6 L7.4 .6 L7.6 14.4 L1.8 15.4 Z" fill="url(#fa)" stroke="#dcc45e" stroke-width=".7"/><path d="M6.6 1.4 L12.2 .8 L12.8 14.2 L7 15.6 Z" fill="url(#fb)" stroke="#cfb24a" stroke-width=".7"/><path d="M12.4 7.4 L13.8 7.8 L13.8 12.6 L12.6 12.8 Z" fill="#efe2a4" stroke="#cdb55a" stroke-width=".5"/><rect x="12.7" y="10.8" width=".9" height="1.6" fill="#6faa58"/></svg>
<span class="t" style="top:455px;line-height:16px;font-size:12px;color:#000;left:172px;">Prog06</span>
<div style="left:141px;top:482px;width:9px;height:1px;background:repeating-linear-gradient(90deg,#8f8f8f 0,#8f8f8f 1px,transparent 1px,transparent 2px);"></div>
<svg style="left:150px;top:473px;" width="16" height="16" viewBox="0 0 16 16"><defs><linearGradient id="fa" x1="0" x2="1"><stop offset="0" stop-color="#fbf3c2"/><stop offset=".6" stop-color="#f2e08c"/><stop offset="1" stop-color="#e6cc62"/></linearGradient><linearGradient id="fb" x1="0" x2="1"><stop offset="0" stop-color="#f7e99e"/><stop offset=".5" stop-color="#ecd36c"/><stop offset="1" stop-color="#dcbc4c"/></linearGradient></defs><path d="M1.6 1.6 L7.4 .6 L7.6 14.4 L1.8 15.4 Z" fill="url(#fa)" stroke="#dcc45e" stroke-width=".7"/><path d="M6.6 1.4 L12.2 .8 L12.8 14.2 L7 15.6 Z" fill="url(#fb)" stroke="#cfb24a" stroke-width=".7"/><path d="M12.4 7.4 L13.8 7.8 L13.8 12.6 L12.6 12.8 Z" fill="#efe2a4" stroke="#cdb55a" stroke-width=".5"/><rect x="12.7" y="10.8" width=".9" height="1.6" fill="#6faa58"/></svg>
<span class="t" style="top:473px;line-height:16px;font-size:12px;color:#000;left:172px;">Prog08</span>
<div style="left:141px;top:500px;width:9px;height:1px;background:repeating-linear-gradient(90deg,#8f8f8f 0,#8f8f8f 1px,transparent 1px,transparent 2px);"></div>
<svg style="left:150px;top:491px;" width="16" height="16" viewBox="0 0 16 16"><defs><linearGradient id="fa" x1="0" x2="1"><stop offset="0" stop-color="#fbf3c2"/><stop offset=".6" stop-color="#f2e08c"/><stop offset="1" stop-color="#e6cc62"/></linearGradient><linearGradient id="fb" x1="0" x2="1"><stop offset="0" stop-color="#f7e99e"/><stop offset=".5" stop-color="#ecd36c"/><stop offset="1" stop-color="#dcbc4c"/></linearGradient></defs><path d="M1.6 1.6 L7.4 .6 L7.6 14.4 L1.8 15.4 Z" fill="url(#fa)" stroke="#dcc45e" stroke-width=".7"/><path d="M6.6 1.4 L12.2 .8 L12.8 14.2 L7 15.6 Z" fill="url(#fb)" stroke="#cfb24a" stroke-width=".7"/><path d="M12.4 7.4 L13.8 7.8 L13.8 12.6 L12.6 12.8 Z" fill="#efe2a4" stroke="#cdb55a" stroke-width=".5"/><rect x="12.7" y="10.8" width=".9" height="1.6" fill="#6faa58"/></svg>
<span class="t" style="top:491px;line-height:16px;font-size:12px;color:#000;left:172px;">Prog09</span>
<div style="left:141px;top:518px;width:9px;height:1px;background:repeating-linear-gradient(90deg,#8f8f8f 0,#8f8f8f 1px,transparent 1px,transparent 2px);"></div>
<svg style="left:150px;top:509px;" width="16" height="16" viewBox="0 0 16 16"><defs><linearGradient id="fa" x1="0" x2="1"><stop offset="0" stop-color="#fbf3c2"/><stop offset=".6" stop-color="#f2e08c"/><stop offset="1" stop-color="#e6cc62"/></linearGradient><linearGradient id="fb" x1="0" x2="1"><stop offset="0" stop-color="#f7e99e"/><stop offset=".5" stop-color="#ecd36c"/><stop offset="1" stop-color="#dcbc4c"/></linearGradient></defs><path d="M1.6 1.6 L7.4 .6 L7.6 14.4 L1.8 15.4 Z" fill="url(#fa)" stroke="#dcc45e" stroke-width=".7"/><path d="M6.6 1.4 L12.2 .8 L12.8 14.2 L7 15.6 Z" fill="url(#fb)" stroke="#cfb24a" stroke-width=".7"/><path d="M12.4 7.4 L13.8 7.8 L13.8 12.6 L12.6 12.8 Z" fill="#efe2a4" stroke="#cdb55a" stroke-width=".5"/><rect x="12.7" y="10.8" width=".9" height="1.6" fill="#6faa58"/></svg>
<span class="t" style="top:509px;line-height:16px;font-size:12px;color:#000;left:172px;">Prog10</span>
<div style="left:141px;top:536px;width:9px;height:1px;background:repeating-linear-gradient(90deg,#8f8f8f 0,#8f8f8f 1px,transparent 1px,transparent 2px);"></div>
<svg style="left:150px;top:527px;" width="16" height="16" viewBox="0 0 16 16"><defs><linearGradient id="fa" x1="0" x2="1"><stop offset="0" stop-color="#fbf3c2"/><stop offset=".6" stop-color="#f2e08c"/><stop offset="1" stop-color="#e6cc62"/></linearGradient><linearGradient id="fb" x1="0" x2="1"><stop offset="0" stop-color="#f7e99e"/><stop offset=".5" stop-color="#ecd36c"/><stop offset="1" stop-color="#dcbc4c"/></linearGradient></defs><path d="M1.6 1.6 L7.4 .6 L7.6 14.4 L1.8 15.4 Z" fill="url(#fa)" stroke="#dcc45e" stroke-width=".7"/><path d="M6.6 1.4 L12.2 .8 L12.8 14.2 L7 15.6 Z" fill="url(#fb)" stroke="#cfb24a" stroke-width=".7"/><path d="M12.4 7.4 L13.8 7.8 L13.8 12.6 L12.6 12.8 Z" fill="#efe2a4" stroke="#cdb55a" stroke-width=".5"/><rect x="12.7" y="10.8" width=".9" height="1.6" fill="#6faa58"/></svg>
<span class="t" style="top:527px;line-height:16px;font-size:12px;color:#000;left:172px;">Prog11</span>
<div style="left:141px;top:554px;width:9px;height:1px;background:repeating-linear-gradient(90deg,#8f8f8f 0,#8f8f8f 1px,transparent 1px,transparent 2px);"></div>
<svg style="left:150px;top:545px;" width="16" height="16" viewBox="0 0 16 16"><defs><linearGradient id="fa" x1="0" x2="1"><stop offset="0" stop-color="#fbf3c2"/><stop offset=".6" stop-color="#f2e08c"/><stop offset="1" stop-color="#e6cc62"/></linearGradient><linearGradient id="fb" x1="0" x2="1"><stop offset="0" stop-color="#f7e99e"/><stop offset=".5" stop-color="#ecd36c"/><stop offset="1" stop-color="#dcbc4c"/></linearGradient></defs><path d="M1.6 1.6 L7.4 .6 L7.6 14.4 L1.8 15.4 Z" fill="url(#fa)" stroke="#dcc45e" stroke-width=".7"/><path d="M6.6 1.4 L12.2 .8 L12.8 14.2 L7 15.6 Z" fill="url(#fb)" stroke="#cfb24a" stroke-width=".7"/><path d="M12.4 7.4 L13.8 7.8 L13.8 12.6 L12.6 12.8 Z" fill="#efe2a4" stroke="#cdb55a" stroke-width=".5"/><rect x="12.7" y="10.8" width=".9" height="1.6" fill="#6faa58"/></svg>
<span class="t" style="top:545px;line-height:16px;font-size:12px;color:#000;left:172px;">Prog12</span>
<div style="left:141px;top:572px;width:9px;height:1px;background:repeating-linear-gradient(90deg,#8f8f8f 0,#8f8f8f 1px,transparent 1px,transparent 2px);"></div>
<svg style="left:150px;top:563px;" width="16" height="16" viewBox="0 0 16 16"><defs><linearGradient id="fa" x1="0" x2="1"><stop offset="0" stop-color="#fbf3c2"/><stop offset=".6" stop-color="#f2e08c"/><stop offset="1" stop-color="#e6cc62"/></linearGradient><linearGradient id="fb" x1="0" x2="1"><stop offset="0" stop-color="#f7e99e"/><stop offset=".5" stop-color="#ecd36c"/><stop offset="1" stop-color="#dcbc4c"/></linearGradient></defs><path d="M1.6 1.6 L7.4 .6 L7.6 14.4 L1.8 15.4 Z" fill="url(#fa)" stroke="#dcc45e" stroke-width=".7"/><path d="M6.6 1.4 L12.2 .8 L12.8 14.2 L7 15.6 Z" fill="url(#fb)" stroke="#cfb24a" stroke-width=".7"/><path d="M12.4 7.4 L13.8 7.8 L13.8 12.6 L12.6 12.8 Z" fill="#efe2a4" stroke="#cdb55a" stroke-width=".5"/><rect x="12.7" y="10.8" width=".9" height="1.6" fill="#6faa58"/></svg>
<span class="t" style="top:563px;line-height:16px;font-size:12px;color:#000;letter-spacing:-0.451px;left:172px;">soc022</span>
<div style="left:141px;top:590px;width:9px;height:1px;background:repeating-linear-gradient(90deg,#8f8f8f 0,#8f8f8f 1px,transparent 1px,transparent 2px);"></div>
<svg style="left:150px;top:581px;" width="16" height="16" viewBox="0 0 16 16"><defs><linearGradient id="fa" x1="0" x2="1"><stop offset="0" stop-color="#fbf3c2"/><stop offset=".6" stop-color="#f2e08c"/><stop offset="1" stop-color="#e6cc62"/></linearGradient><linearGradient id="fb" x1="0" x2="1"><stop offset="0" stop-color="#f7e99e"/><stop offset=".5" stop-color="#ecd36c"/><stop offset="1" stop-color="#dcbc4c"/></linearGradient></defs><path d="M1.6 1.6 L7.4 .6 L7.6 14.4 L1.8 15.4 Z" fill="url(#fa)" stroke="#dcc45e" stroke-width=".7"/><path d="M6.6 1.4 L12.2 .8 L12.8 14.2 L7 15.6 Z" fill="url(#fb)" stroke="#cfb24a" stroke-width=".7"/><path d="M12.4 7.4 L13.8 7.8 L13.8 12.6 L12.6 12.8 Z" fill="#efe2a4" stroke="#cdb55a" stroke-width=".5"/><rect x="12.7" y="10.8" width=".9" height="1.6" fill="#6faa58"/></svg>
<span class="t" style="top:581px;line-height:16px;font-size:12px;color:#000;letter-spacing:-0.839px;left:172px;">SOC034</span>
<svg style="left:137px;top:604px;" width="7" height="7" viewBox="0 0 7 7"><path d="M6.2 .5 V6.2 H.5 Z" fill="#5a5a5a" stroke="#222" stroke-width=".7"/></svg>
<div style="left:146px;top:608px;width:4px;height:1px;background:repeating-linear-gradient(90deg,#8f8f8f 0,#8f8f8f 1px,transparent 1px,transparent 2px);"></div>
<svg style="left:150px;top:599px;" width="16" height="16" viewBox="0 0 16 16"><defs><linearGradient id="fa" x1="0" x2="1"><stop offset="0" stop-color="#fbf3c2"/><stop offset=".6" stop-color="#f2e08c"/><stop offset="1" stop-color="#e6cc62"/></linearGradient><linearGradient id="fb" x1="0" x2="1"><stop offset="0" stop-color="#f7e99e"/><stop offset=".5" stop-color="#ecd36c"/><stop offset="1" stop-color="#dcbc4c"/></linearGradient></defs><path d="M1.6 1.6 L7.4 .6 L7.6 14.4 L1.8 15.4 Z" fill="url(#fa)" stroke="#dcc45e" stroke-width=".7"/><path d="M6.6 1.4 L12.2 .8 L12.8 14.2 L7 15.6 Z" fill="url(#fb)" stroke="#cfb24a" stroke-width=".7"/><path d="M12.4 7.4 L13.8 7.8 L13.8 12.6 L12.6 12.8 Z" fill="#efe2a4" stroke="#cdb55a" stroke-width=".5"/><rect x="12.7" y="10.8" width=".9" height="1.6" fill="#6faa58"/></svg>
<span class="t" style="top:599px;line-height:16px;font-size:12px;color:#000;letter-spacing:-0.451px;left:172px;">soc044</span>
</div></div>
<div style="left:261px;top:165px;width:17px;height:450px;background:linear-gradient(90deg,#e6e6e6,#f4f4f4 40%,#f1f1f1);"></div>
<svg style="left:266px;top:171px;" width="7" height="4" viewBox="0 0 7 4"><path d="M0 4 H7 L3.5 0 Z" fill="#404040"/></svg>
<svg style="left:266px;top:605px;" width="7" height="4" viewBox="0 0 7 4"><path d="M0 0 H7 L3.5 4 Z" fill="#404040"/></svg>
<div style="left:262px;top:206px;width:15px;height:16px;border:1px solid #979797;border-radius:2px;background:linear-gradient(90deg,#f5f5f5,#e6e6e6 45%,#cfcfcf 55%,#d8d8d8);"></div>
<div style="left:14px;top:615px;width:247px;height:17px;background:linear-gradient(180deg,#e6e6e6,#f4f4f4 40%,#f1f1f1);"></div>
<svg style="left:20px;top:620px;" width="4" height="7" viewBox="0 0 4 7"><path d="M4 0 V7 L0 3.5 Z" fill="#404040"/></svg>
<svg style="left:251px;top:620px;" width="4" height="7" viewBox="0 0 4 7"><path d="M0 0 V7 L4 3.5 Z" fill="#404040"/></svg>
<div style="left:33px;top:616px;width:92px;height:15px;border:1px solid #979797;border-radius:2px;background:linear-gradient(180deg,#f5f5f5,#e6e6e6 45%,#cfcfcf 55%,#d8d8d8);"></div>
<div style="left:77px;top:620px;width:1px;height:7px;background:#6a6a6a;"></div>
<div style="left:79px;top:620px;width:1px;height:7px;background:#6a6a6a;"></div>
<div style="left:81px;top:620px;width:1px;height:7px;background:#6a6a6a;"></div>
<div style="left:261px;top:615px;width:18px;height:18px;background:#f0f0f0;"></div>
<div style="left:279px;top:165px;width:5px;height:468px;background:#f0f0f0;"></div>
<div style="left:283px;top:165px;width:1px;height:468px;background:#a0a0a0;"></div>
<div style="left:284px;top:165px;width:814px;height:468px;background:#fff;"></div>
<div style="left:284px;top:165px;width:814px;height:24px;background:linear-gradient(180deg,#fbfdfe 0,#eef7fc 40%,#d9edf7 100%);border-bottom:1px solid #c3dcea;"></div>
<span class="t" style="top:171px;line-height:16px;font-size:12px;color:#000;letter-spacing:-0.004px;left:290px;">Name</span>
<span class="t" style="top:171px;line-height:16px;font-size:12px;color:#000;letter-spacing:-0.448px;left:355px;">Ext</span>
<svg style="left:607px;top:167px;" width="7" height="4" viewBox="0 0 7 4"><path d="M0 4 L3.5 0 L7 4 Z" fill="#4a5f7c"/></svg>
<div class="clip" style="left:284px;top:189px;width:797px;height:426px;"><div style="left:-284px;top:-189px;width:1634px;height:925px">
<div style="left:937px;top:189px;width:1px;height:426px;background:#eef1f5;"></div>
<div style="left:1007px;top:189px;width:1px;height:426px;background:#eef1f5;"></div>
<div style="left:285px;top:532px;width:651px;height:19px;border:1px solid #d9d9d9;border-radius:3px;background:linear-gradient(180deg,#f8f8f8,#e6e6e6);"></div>
<svg style="left:288px;top:192px;" width="16" height="16" viewBox="0 0 16 16"><defs><linearGradient id="sk" x1="0" y1="0" x2="1" y2="1"><stop offset="0" stop-color="#5fa6dc"/><stop offset=".6" stop-color="#bfe3f2"/><stop offset="1" stop-color="#e8f6fa"/></linearGradient></defs><rect x=".5" y="1.5" width="15" height="13" fill="#f3f5f7" stroke="#b7bec6"/><rect x="2" y="3" width="12" height="10" fill="url(#sk)"/><path d="M2 13 L2 8.2 L5.5 7 L9 9.2 L14 8.4 L14 13 Z" fill="#1f666c"/><path d="M2 13 L2 11 L7 10.2 L14 11.4 L14 13 Z" fill="#6fbccc"/></svg>
<span class="t" style="top:192px;line-height:16px;font-size:12px;color:#000;letter-spacing:-0.490px;left:306px;">16632_s.jpg</span>
<svg style="left:288px;top:211px;" width="16" height="16" viewBox="0 0 16 16"><defs><linearGradient id="gp" x1="0" y1="0" x2="1" y2="1"><stop offset="0" stop-color="#ffffff"/><stop offset=".55" stop-color="#dbe8f8"/><stop offset="1" stop-color="#8fb8ec"/></linearGradient></defs><path d="M3.5 1.5 H11.5 L14.5 4.5 V15.5 H3.5 Z" fill="url(#gp)" stroke="#6f93cc" stroke-width=".9"/><path d="M11.5 1.5 V4.5 H14.5" fill="#eaf2fb" stroke="#6f93cc" stroke-width=".7"/><rect x=".7" y=".7" width="8.4" height="8.4" fill="#fdf1f1" stroke="#a3262c" stroke-width="1.3"/><path d="M1.6 8.3 L3.8 5.4 L5.2 6.8 L6.3 5.8 L8.3 8.3 Z" fill="#a3262c"/><circle cx="4.2" cy="3.3" r="1" fill="#c23a40"/><path d="M6.5 10.5 L9.5 9.5 L10 11 Z" fill="#e8a33c"/></svg>
<span class="t" style="top:211px;line-height:16px;font-size:12px;color:#000;letter-spacing:-0.060px;left:306px;">24.gif</span>
<svg style="left:288px;top:230px;" width="16" height="16" viewBox="0 0 16 16"><defs><linearGradient id="sk" x1="0" y1="0" x2="1" y2="1"><stop offset="0" stop-color="#5fa6dc"/><stop offset=".6" stop-color="#bfe3f2"/><stop offset="1" stop-color="#e8f6fa"/></linearGradient></defs><rect x=".5" y="1.5" width="15" height="13" fill="#f3f5f7" stroke="#b7bec6"/><rect x="2" y="3" width="12" height="10" fill="url(#sk)"/><path d="M2 13 L2 8.2 L5.5 7 L9 9.2 L14 8.4 L14 13 Z" fill="#1f666c"/><path d="M2 13 L2 11 L7 10.2 L14 11.4 L14 13 Z" fill="#6fbccc"/></svg>
<span class="t" style="top:230px;line-height:16px;font-size:12px;color:#000;letter-spacing:-0.490px;left:306px;">27157_s.jpg</span>
<svg style="left:288px;top:249px;" width="16" height="16" viewBox="0 0 16 16"><defs><linearGradient id="sk" x1="0" y1="0" x2="1" y2="1"><stop offset="0" stop-color="#5fa6dc"/><stop offset=".6" stop-color="#bfe3f2"/><stop offset="1" stop-color="#e8f6fa"/></linearGradient></defs><rect x=".5" y="1.5" width="15" height="13" fill="#f3f5f7" stroke="#b7bec6"/><rect x="2" y="3" width="12" height="10" fill="url(#sk)"/><path d="M2 13 L2 8.2 L5.5 7 L9 9.2 L14 8.4 L14 13 Z" fill="#1f666c"/><path d="M2 13 L2 11 L7 10.2 L14 11.4 L14 13 Z" fill="#6fbccc"/></svg>
<span class="t" style="top:249px;line-height:16px;font-size:12px;color:#000;letter-spacing:-0.490px;left:306px;">27290_s.jpg</span>
<svg style="left:288px;top:268px;" width="16" height="16" viewBox="0 0 16 16"><defs><linearGradient id="gp" x1="0" y1="0" x2="1" y2="1"><stop offset="0" stop-color="#ffffff"/><stop offset=".55" stop-color="#dbe8f8"/><stop offset="1" stop-color="#8fb8ec"/></linearGradient></defs><path d="M3.5 1.5 H11.5 L14.5 4.5 V15.5 H3.5 Z" fill="url(#gp)" stroke="#6f93cc" stroke-width=".9"/><path d="M11.5 1.5 V4.5 H14.5" fill="#eaf2fb" stroke="#6f93cc" stroke-width=".7"/><rect x=".7" y=".7" width="8.4" height="8.4" fill="#fdf1f1" stroke="#a3262c" stroke-width="1.3"/><path d="M1.6 8.3 L3.8 5.4 L5.2 6.8 L6.3 5.8 L8.3 8.3 Z" fill="#a3262c"/><circle cx="4.2" cy="3.3" r="1" fill="#c23a40"/><path d="M6.5 10.5 L9.5 9.5 L10 11 Z" fill="#e8a33c"/></svg>
<span class="t" style="top:268px;line-height:16px;font-size:12px;color:#000;letter-spacing:-0.060px;left:306px;">33.gif</span>
<svg style="left:288px;top:287px;" width="16" height="16" viewBox="0 0 16 16"><defs><linearGradient id="sk" x1="0" y1="0" x2="1" y2="1"><stop offset="0" stop-color="#5fa6dc"/><stop offset=".6" stop-color="#bfe3f2"/><stop offset="1" stop-color="#e8f6fa"/></linearGradient></defs><rect x=".5" y="1.5" width="15" height="13" fill="#f3f5f7" stroke="#b7bec6"/><rect x="2" y="3" width="12" height="10" fill="url(#sk)"/><path d="M2 13 L2 8.2 L5.5 7 L9 9.2 L14 8.4 L14 13 Z" fill="#1f666c"/><path d="M2 13 L2 11 L7 10.2 L14 11.4 L14 13 Z" fill="#6fbccc"/></svg>
<span class="t" style="top:287px;line-height:16px;font-size:12px;color:#000;letter-spacing:-0.490px;left:306px;">33952_s.jpg</span>
<svg style="left:288px;top:306px;" width="16" height="16" viewBox="0 0 16 16"><defs><linearGradient id="gp" x1="0" y1="0" x2="1" y2="1"><stop offset="0" stop-color="#ffffff"/><stop offset=".55" stop-color="#dbe8f8"/><stop offset="1" stop-color="#8fb8ec"/></linearGradient></defs><path d="M3.5 1.5 H11.5 L14.5 4.5 V15.5 H3.5 Z" fill="url(#gp)" stroke="#6f93cc" stroke-width=".9"/><path d="M11.5 1.5 V4.5 H14.5" fill="#eaf2fb" stroke="#6f93cc" stroke-width=".7"/><rect x=".7" y=".7" width="8.4" height="8.4" fill="#fdf1f1" stroke="#a3262c" stroke-width="1.3"/><path d="M1.6 8.3 L3.8 5.4 L5.2 6.8 L6.3 5.8 L8.3 8.3 Z" fill="#a3262c"/><circle cx="4.2" cy="3.3" r="1" fill="#c23a40"/><path d="M6.5 10.5 L9.5 9.5 L10 11 Z" fill="#e8a33c"/></svg>
<span class="t" style="top:306px;line-height:16px;font-size:12px;color:#000;letter-spacing:-0.060px;left:306px;">35.gif</span>
<svg style="left:288px;top:325px;" width="16" height="16" viewBox="0 0 16 16"><defs><linearGradient id="gp" x1="0" y1="0" x2="1" y2="1"><stop offset="0" stop-color="#ffffff"/><stop offset=".55" stop-color="#dbe8f8"/><stop offset="1" stop-color="#8fb8ec"/></linearGradient></defs><path d="M3.5 1.5 H11.5 L14.5 4.5 V15.5 H3.5 Z" fill="url(#gp)" stroke="#6f93cc" stroke-width=".9"/><path d="M11.5 1.5 V4.5 H14.5" fill="#eaf2fb" stroke="#6f93cc" stroke-width=".7"/><rect x=".7" y=".7" width="8.4" height="8.4" fill="#fdf1f1" stroke="#a3262c" stroke-width="1.3"/><path d="M1.6 8.3 L3.8 5.4 L5.2 6.8 L6.3 5.8 L8.3 8.3 Z" fill="#a3262c"/><circle cx="4.2" cy="3.3" r="1" fill="#c23a40"/><path d="M6.5 10.5 L9.5 9.5 L10 11 Z" fill="#e8a33c"/></svg>
<span class="t" style="top:325px;line-height:16px;font-size:12px;color:#000;letter-spacing:-0.060px;left:306px;">39.gif</span>
<svg style="left:288px;top:344px;" width="16" height="16" viewBox="0 0 16 16"><defs><linearGradient id="gp" x1="0" y1="0" x2="1" y2="1"><stop offset="0" stop-color="#ffffff"/><stop offset=".55" stop-color="#dbe8f8"/><stop offset="1" stop-color="#8fb8ec"/></linearGradient></defs><path d="M3.5 1.5 H11.5 L14.5 4.5 V15.5 H3.5 Z" fill="url(#gp)" stroke="#6f93cc" stroke-width=".9"/><path d="M11.5 1.5 V4.5 H14.5" fill="#eaf2fb" stroke="#6f93cc" stroke-width=".7"/><rect x=".7" y=".7" width="8.4" height="8.4" fill="#fdf1f1" stroke="#a3262c" stroke-width="1.3"/><path d="M1.6 8.3 L3.8 5.4 L5.2 6.8 L6.3 5.8 L8.3 8.3 Z" fill="#a3262c"/><circle cx="4.2" cy="3.3" r="1" fill="#c23a40"/><path d="M6.5 10.5 L9.5 9.5 L10 11 Z" fill="#e8a33c"/></svg>
<span class="t" style="top:344px;line-height:16px;font-size:12px;color:#000;letter-spacing:0.020px;left:306px;">3dot_blue.gif</span>
<svg style="left:288px;top:363px;" width="16" height="16" viewBox="0 0 16 16"><defs><linearGradient id="gp" x1="0" y1="0" x2="1" y2="1"><stop offset="0" stop-color="#ffffff"/><stop offset=".55" stop-color="#dbe8f8"/><stop offset="1" stop-color="#8fb8ec"/></linearGradient></defs><path d="M3.5 1.5 H11.5 L14.5 4.5 V15.5 H3.5 Z" fill="url(#gp)" stroke="#6f93cc" stroke-width=".9"/><path d="M11.5 1.5 V4.5 H14.5" fill="#eaf2fb" stroke="#6f93cc" stroke-width=".7"/><rect x=".7" y=".7" width="8.4" height="8.4" fill="#fdf1f1" stroke="#a3262c" stroke-width="1.3"/><path d="M1.6 8.3 L3.8 5.4 L5.2 6.8 L6.3 5.8 L8.3 8.3 Z" fill="#a3262c"/><circle cx="4.2" cy="3.3" r="1" fill="#c23a40"/><path d="M6.5 10.5 L9.5 9.5 L10 11 Z" fill="#e8a33c"/></svg>
<span class="t" style="top:363px;line-height:16px;font-size:12px;color:#000;letter-spacing:-0.052px;left:306px;">3dot_green.gif</span>
<svg style="left:288px;top:382px;" width="16" height="16" viewBox="0 0 16 16"><defs><linearGradient id="sk" x1="0" y1="0" x2="1" y2="1"><stop offset="0" stop-color="#5fa6dc"/><stop offset=".6" stop-color="#bfe3f2"/><stop offset="1" stop-color="#e8f6fa"/></linearGradient></defs><rect x=".5" y="1.5" width="15" height="13" fill="#f3f5f7" stroke="#b7bec6"/><rect x="2" y="3" width="12" height="10" fill="url(#sk)"/><path d="M2 13 L2 8.2 L5.5 7 L9 9.2 L14 8.4 L14 13 Z" fill="#1f666c"/><path d="M2 13 L2 11 L7 10.2 L14 11.4 L14 13 Z" fill="#6fbccc"/></svg>
<span class="t" style="top:382px;line-height:16px;font-size:12px;color:#000;letter-spacing:-0.339px;left:306px;">4124_l.jpg</span>
<svg style="left:288px;top:401px;" width="16" height="16" viewBox="0 0 16 16"><defs><linearGradient id="sk" x1="0" y1="0" x2="1" y2="1"><stop offset="0" stop-color="#5fa6dc"/><stop offset=".6" stop-color="#bfe3f2"/><stop offset="1" stop-color="#e8f6fa"/></linearGradient></defs><rect x=".5" y="1.5" width="15" height="13" fill="#f3f5f7" stroke="#b7bec6"/><rect x="2" y="3" width="12" height="10" fill="url(#sk)"/><path d="M2 13 L2 8.2 L5.5 7 L9 9.2 L14 8.4 L14 13 Z" fill="#1f666c"/><path d="M2 13 L2 11 L7 10.2 L14 11.4 L14 13 Z" fill="#6fbccc"/></svg>
<span class="t" style="top:401px;line-height:16px;font-size:12px;color:#000;letter-spacing:-0.472px;left:306px;">6929_s.jpg</span>
<svg style="left:288px;top:420px;" width="16" height="16" viewBox="0 0 16 16"><defs><linearGradient id="sk" x1="0" y1="0" x2="1" y2="1"><stop offset="0" stop-color="#5fa6dc"/><stop offset=".6" stop-color="#bfe3f2"/><stop offset="1" stop-color="#e8f6fa"/></linearGradient></defs><rect x=".5" y="1.5" width="15" height="13" fill="#f3f5f7" stroke="#b7bec6"/><rect x="2" y="3" width="12" height="10" fill="url(#sk)"/><path d="M2 13 L2 8.2 L5.5 7 L9 9.2 L14 8.4 L14 13 Z" fill="#1f666c"/><path d="M2 13 L2 11 L7 10.2 L14 11.4 L14 13 Z" fill="#6fbccc"/></svg>
<span class="t" style="top:420px;line-height:16px;font-size:12px;color:#000;letter-spacing:-0.472px;left:306px;">6930_s.jpg</span>
<svg style="left:288px;top:439px;" width="16" height="16" viewBox="0 0 16 16"><defs><linearGradient id="gp" x1="0" y1="0" x2="1" y2="1"><stop offset="0" stop-color="#ffffff"/><stop offset=".55" stop-color="#dbe8f8"/><stop offset="1" stop-color="#8fb8ec"/></linearGradient></defs><path d="M3.5 1.5 H11.5 L14.5 4.5 V15.5 H3.5 Z" fill="url(#gp)" stroke="#6f93cc" stroke-width=".9"/><path d="M11.5 1.5 V4.5 H14.5" fill="#eaf2fb" stroke="#6f93cc" stroke-width=".7"/><rect x=".7" y=".7" width="8.4" height="8.4" fill="#fdf1f1" stroke="#a3262c" stroke-width="1.3"/><path d="M1.6 8.3 L3.8 5.4 L5.2 6.8 L6.3 5.8 L8.3 8.3 Z" fill="#a3262c"/><circle cx="4.2" cy="3.3" r="1" fill="#c23a40"/><path d="M6.5 10.5 L9.5 9.5 L10 11 Z" fill="#e8a33c"/></svg>
<span class="t" style="top:439px;line-height:16px;font-size:12px;color:#000;letter-spacing:-0.003px;left:306px;">bizrate.gif</span>
<svg style="left:288px;top:458px;" width="16" height="16" viewBox="0 0 16 16"><path d="M2.5 .5 H10.5 L13.5 3.5 V15.5 H2.5 Z" fill="#fdfdfd" stroke="#9aa0a8"/><path d="M10.5 .5 V3.5 H13.5" fill="#e8ebef" stroke="#9aa0a8"/><rect x="4.5" y="6" width="6.5" height="6" fill="#b9cfe6"/><path d="M4.5 12 L7 8.5 L9 10.5 L11 9 V12 Z" fill="#7fa76a"/><circle cx="9.4" cy="7.3" r="1.1" fill="#e8a33c"/></svg>
<span class="t" style="top:458px;line-height:16px;font-size:12px;color:#000;letter-spacing:-0.069px;left:306px;">BUY.png</span>
<svg style="left:288px;top:477px;" width="16" height="16" viewBox="0 0 16 16"><path d="M2.5 .5 H10.5 L13.5 3.5 V15.5 H2.5 Z" fill="#fdfdfd" stroke="#9aa0a8"/><path d="M10.5 .5 V3.5 H13.5" fill="#e8ebef" stroke="#9aa0a8"/><rect x="4.5" y="6" width="6.5" height="6" fill="#b9cfe6"/><path d="M4.5 12 L7 8.5 L9 10.5 L11 9 V12 Z" fill="#7fa76a"/><circle cx="9.4" cy="7.3" r="1.1" fill="#e8a33c"/></svg>
<span class="t" style="top:477px;line-height:16px;font-size:12px;color:#000;letter-spacing:-0.030px;left:306px;">Calculate.png</span>
<span class="t" style="top:477px;line-height:16px;font-size:12px;color:#000;letter-spacing:-0.300px;right:634px;">1 288 B</span>
<span class="t" style="top:477px;line-height:16px;font-size:12px;color:#000;letter-spacing:-0.390px;left:1014.6px;">26/07/2003 1</span>
<svg style="left:288px;top:496px;" width="16" height="16" viewBox="0 0 16 16"><path d="M2.5 .5 H10.5 L13.5 3.5 V15.5 H2.5 Z" fill="#fdfdfd" stroke="#9aa0a8"/><path d="M10.5 .5 V3.5 H13.5" fill="#e8ebef" stroke="#9aa0a8"/><rect x="4.5" y="6" width="6.5" height="6" fill="#b9cfe6"/><path d="M4.5 12 L7 8.5 L9 10.5 L11 9 V12 Z" fill="#7fa76a"/><circle cx="9.4" cy="7.3" r="1.1" fill="#e8a33c"/></svg>
<span class="t" style="top:496px;line-height:16px;font-size:12px;color:#000;letter-spacing:0.114px;left:306px;">Computer+hardware+%2D+Monitors.png</span>
<span class="t" style="top:496px;line-height:16px;font-size:12px;color:#000;letter-spacing:-0.300px;right:634px;">1 816 B</span>
<span class="t" style="top:496px;line-height:16px;font-size:12px;color:#000;letter-spacing:-0.390px;left:1014.6px;">26/07/2003 1</span>
<svg style="left:288px;top:515px;" width="16" height="16" viewBox="0 0 16 16"><rect x=".7" y=".7" width="14.6" height="14.6" fill="#fdfdf6" stroke="#222" stroke-width="1.2"/><path d="M11.5 3.6 C9 2 5 2.6 5 5 C5 7.6 11 7 11 10 C11 12.6 6.5 13.2 4 11.6" fill="none" stroke="#2a2a2a" stroke-width="3"/><path d="M11.5 3.6 C9 2 5 2.6 5 5 C5 7.6 11 7 11 10 C11 12.6 6.5 13.2 4 11.6" fill="none" stroke="#f2d21c" stroke-width="1.6"/></svg>
<span class="t" style="top:515px;line-height:16px;font-size:12px;color:#000;letter-spacing:-0.003px;left:306px;">global.js</span>
<span class="t" style="top:515px;line-height:16px;font-size:12px;color:#000;letter-spacing:-0.300px;right:634px;">1 244 B</span>
<span class="t" style="top:515px;line-height:16px;font-size:12px;color:#000;letter-spacing:-0.390px;left:1014.6px;">26/07/2003 1</span>
<svg style="left:288px;top:534px;" width="16" height="16" viewBox="0 0 16 16"><path d="M2.5 .5 H10.5 L13.5 3.5 V15.5 H2.5 Z" fill="#fdfdfd" stroke="#9aa0a8"/><path d="M10.5 .5 V3.5 H13.5" fill="#e8ebef" stroke="#9aa0a8"/><rect x="4.5" y="6" width="6.5" height="6" fill="#b9cfe6"/><path d="M4.5 12 L7 8.5 L9 10.5 L11 9 V12 Z" fill="#7fa76a"/><circle cx="9.4" cy="7.3" r="1.1" fill="#e8a33c"/></svg>
<span class="t" style="top:534px;line-height:16px;font-size:12px;color:#000;letter-spacing:-0.042px;left:306px;">Got+questions?.png</span>
<span class="t" style="top:534px;line-height:16px;font-size:12px;color:#000;letter-spacing:-0.300px;right:634px;">1 119 B</span>
<span class="t" style="top:534px;line-height:16px;font-size:12px;color:#000;letter-spacing:-0.390px;left:1014.6px;">26/07/2003 1</span>
<svg style="left:288px;top:553px;" width="16" height="16" viewBox="0 0 16 16"><defs><linearGradient id="gp" x1="0" y1="0" x2="1" y2="1"><stop offset="0" stop-color="#ffffff"/><stop offset=".55" stop-color="#dbe8f8"/><stop offset="1" stop-color="#8fb8ec"/></linearGradient></defs><path d="M3.5 1.5 H11.5 L14.5 4.5 V15.5 H3.5 Z" fill="url(#gp)" stroke="#6f93cc" stroke-width=".9"/><path d="M11.5 1.5 V4.5 H14.5" fill="#eaf2fb" stroke="#6f93cc" stroke-width=".7"/><rect x=".7" y=".7" width="8.4" height="8.4" fill="#fdf1f1" stroke="#a3262c" stroke-width="1.3"/><path d="M1.6 8.3 L3.8 5.4 L5.2 6.8 L6.3 5.8 L8.3 8.3 Z" fill="#a3262c"/><circle cx="4.2" cy="3.3" r="1" fill="#c23a40"/><path d="M6.5 10.5 L9.5 9.5 L10 11 Z" fill="#e8a33c"/></svg>
<span class="t" style="top:553px;line-height:16px;font-size:12px;color:#000;letter-spacing:0.412px;left:306px;">logo.gif</span>
<span class="t" style="top:553px;line-height:16px;font-size:12px;color:#000;letter-spacing:-0.300px;right:634px;">1 426 B</span>
<span class="t" style="top:553px;line-height:16px;font-size:12px;color:#000;letter-spacing:-0.390px;left:1014.6px;">26/07/2003 1</span>
<svg style="left:288px;top:572px;" width="16" height="16" viewBox="0 0 16 16"><defs><linearGradient id="gp" x1="0" y1="0" x2="1" y2="1"><stop offset="0" stop-color="#ffffff"/><stop offset=".55" stop-color="#dbe8f8"/><stop offset="1" stop-color="#8fb8ec"/></linearGradient></defs><path d="M3.5 1.5 H11.5 L14.5 4.5 V15.5 H3.5 Z" fill="url(#gp)" stroke="#6f93cc" stroke-width=".9"/><path d="M11.5 1.5 V4.5 H14.5" fill="#eaf2fb" stroke="#6f93cc" stroke-width=".7"/><rect x=".7" y=".7" width="8.4" height="8.4" fill="#fdf1f1" stroke="#a3262c" stroke-width="1.3"/><path d="M1.6 8.3 L3.8 5.4 L5.2 6.8 L6.3 5.8 L8.3 8.3 Z" fill="#a3262c"/><circle cx="4.2" cy="3.3" r="1" fill="#c23a40"/><path d="M6.5 10.5 L9.5 9.5 L10 11 Z" fill="#e8a33c"/></svg>
<span class="t" style="top:572px;line-height:16px;font-size:12px;color:#000;letter-spacing:0.207px;left:306px;">menu_account-off.gif</span>
<span class="t" style="top:572px;line-height:16px;font-size:12px;color:#000;letter-spacing:-0.300px;right:634px;">296 B</span>
<span class="t" style="top:572px;line-height:16px;font-size:12px;color:#000;letter-spacing:-0.390px;left:1014.6px;">26/07/2003 1</span>
<svg style="left:288px;top:591px;" width="16" height="16" viewBox="0 0 16 16"><defs><linearGradient id="gp" x1="0" y1="0" x2="1" y2="1"><stop offset="0" stop-color="#ffffff"/><stop offset=".55" stop-color="#dbe8f8"/><stop offset="1" stop-color="#8fb8ec"/></linearGradient></defs><path d="M3.5 1.5 H11.5 L14.5 4.5 V15.5 H3.5 Z" fill="url(#gp)" stroke="#6f93cc" stroke-width=".9"/><path d="M11.5 1.5 V4.5 H14.5" fill="#eaf2fb" stroke="#6f93cc" stroke-width=".7"/><rect x=".7" y=".7" width="8.4" height="8.4" fill="#fdf1f1" stroke="#a3262c" stroke-width="1.3"/><path d="M1.6 8.3 L3.8 5.4 L5.2 6.8 L6.3 5.8 L8.3 8.3 Z" fill="#a3262c"/><circle cx="4.2" cy="3.3" r="1" fill="#c23a40"/><path d="M6.5 10.5 L9.5 9.5 L10 11 Z" fill="#e8a33c"/></svg>
<span class="t" style="top:591px;line-height:16px;font-size:12px;color:#000;letter-spacing:0.150px;left:306px;">menu_cellular-off.gif</span>
<span class="t" style="top:591px;line-height:16px;font-size:12px;color:#000;letter-spacing:-0.300px;right:634px;">278 B</span>
<span class="t" style="top:591px;line-height:16px;font-size:12px;color:#000;letter-spacing:-0.390px;left:1014.6px;">26/07/2003 1</span>
<svg style="left:288px;top:610px;" width="16" height="16" viewBox="0 0 16 16"><defs><linearGradient id="gp" x1="0" y1="0" x2="1" y2="1"><stop offset="0" stop-color="#ffffff"/><stop offset=".55" stop-color="#dbe8f8"/><stop offset="1" stop-color="#8fb8ec"/></linearGradient></defs><path d="M3.5 1.5 H11.5 L14.5 4.5 V15.5 H3.5 Z" fill="url(#gp)" stroke="#6f93cc" stroke-width=".9"/><path d="M11.5 1.5 V4.5 H14.5" fill="#eaf2fb" stroke="#6f93cc" stroke-width=".7"/><rect x=".7" y=".7" width="8.4" height="8.4" fill="#fdf1f1" stroke="#a3262c" stroke-width="1.3"/><path d="M1.6 8.3 L3.8 5.4 L5.2 6.8 L6.3 5.8 L8.3 8.3 Z" fill="#a3262c"/><circle cx="4.2" cy="3.3" r="1" fill="#c23a40"/><path d="M6.5 10.5 L9.5 9.5 L10 11 Z" fill="#e8a33c"/></svg>
<span class="t" style="top:610px;line-height:16px;font-size:12px;color:#000;letter-spacing:0.274px;left:306px;">menu_company-off.gif</span>
<span class="t" style="top:610px;line-height:16px;font-size:12px;color:#000;letter-spacing:-0.300px;right:634px;">232 B</span>
<span class="t" style="top:610px;line-height:16px;font-size:12px;color:#000;letter-spacing:-0.390px;left:1014.6px;">26/07/2003 1</span>
</div></div>
<div style="left:1081px;top:165px;width:17px;height:450px;background:linear-gradient(90deg,#e6e6e6,#f4f4f4 40%,#f1f1f1);"></div>
<svg style="left:1086px;top:171px;" width="7" height="4" viewBox="0 0 7 4"><path d="M0 4 H7 L3.5 0 Z" fill="#404040"/></svg>
<svg style="left:1086px;top:605px;" width="7" height="4" viewBox="0 0 7 4"><path d="M0 0 H7 L3.5 4 Z" fill="#404040"/></svg>
<div style="left:284px;top:615px;width:797px;height:17px;background:linear-gradient(180deg,#e6e6e6,#f4f4f4 40%,#f1f1f1);"></div>
<svg style="left:290px;top:620px;" width="4" height="7" viewBox="0 0 4 7"><path d="M4 0 V7 L0 3.5 Z" fill="#404040"/></svg>
<svg style="left:1071px;top:620px;" width="4" height="7" viewBox="0 0 4 7"><path d="M0 0 V7 L4 3.5 Z" fill="#404040"/></svg>
<div style="left:303px;top:616px;width:553px;height:15px;border:1px solid #979797;border-radius:2px;background:linear-gradient(180deg,#f5f5f5,#e6e6e6 45%,#cfcfcf 55%,#d8d8d8);"></div>
<div style="left:577px;top:620px;width:1px;height:7px;background:#6a6a6a;"></div>
<div style="left:579px;top:620px;width:1px;height:7px;background:#6a6a6a;"></div>
<div style="left:581px;top:620px;width:1px;height:7px;background:#6a6a6a;"></div>
<div style="left:1081px;top:615px;width:17px;height:18px;background:#f0f0f0;"></div>
<div style="left:13px;top:633px;width:1085px;height:4px;background:#f0f0f0;"></div>
<div style="left:13px;top:633px;width:266px;height:1px;background:#a3a3a3;"></div>
<div style="left:283px;top:633px;width:815px;height:1px;background:#a3a3a3;"></div>
<div style="left:278px;top:165px;width:1px;height:469px;background:#a3a3a3;"></div>
<div style="left:13px;top:636px;width:1085px;height:1px;background:#a5a5a5;"></div>
<div style="left:13px;top:637px;width:1085px;height:20px;background:#f0eeee;"></div>
<span class="t" style="top:640px;line-height:16px;font-size:12px;color:#000;letter-spacing:-0.330px;left:14px;">1 119 B of 56 701 B in 1 of 57</span>
<div style="left:877px;top:638px;width:1px;height:18px;background:#c9c9c9;"></div>
<div style="left:878px;top:638px;width:1px;height:18px;background:#fff;"></div>
<div style="left:912px;top:638px;width:1px;height:18px;background:#c9c9c9;"></div>
<div style="left:913px;top:638px;width:1px;height:18px;background:#fff;"></div>
<div style="left:982px;top:638px;width:1px;height:18px;background:#c9c9c9;"></div>
<div style="left:983px;top:638px;width:1px;height:18px;background:#fff;"></div>
<div style="left:1017px;top:638px;width:1px;height:18px;background:#c9c9c9;"></div>
<div style="left:1018px;top:638px;width:1px;height:18px;background:#fff;"></div>
<svg style="left:888px;top:638px;" width="14" height="17" viewBox="0 0 14 17"><rect x="1" y="7.5" width="12" height="8.5" rx="1" fill="#cfcfcf" stroke="#b3b3b3"/><path d="M3.5 7.5 V5 a3.5 3.5 0 0 1 7 0 V7.5" fill="none" stroke="#bdbdbd" stroke-width="1.6"/></svg>
<span class="t" style="top:640px;line-height:16px;font-size:12px;color:#000;letter-spacing:-0.891px;left:937px;">FTP</span>
<svg style="left:991px;top:638px;" width="16" height="17" viewBox="0 0 16 17"><rect x="2" y="1.5" width="9" height="8" fill="#d8d8d8" stroke="#aaa"/><path d="M9 4 H13 V13 M10.5 15 H15.5 M13 13 V15" stroke="#aaa" stroke-width="1.2" fill="none"/></svg>
<span class="t" style="top:640px;line-height:16px;font-size:12px;color:#000;letter-spacing:-0.578px;left:1039px;">1:30:33</span>
<div style="left:1094px;top:653px;width:2px;height:2px;background:#b8b8b8;"></div>
<div style="left:1091px;top:653px;width:2px;height:2px;background:#b8b8b8;"></div>
<div style="left:1088px;top:653px;width:2px;height:2px;background:#b8b8b8;"></div>
<div style="left:1094px;top:650px;width:2px;height:2px;background:#b8b8b8;"></div>
<div style="left:1091px;top:650px;width:2px;height:2px;background:#b8b8b8;"></div>
<div style="left:1094px;top:647px;width:2px;height:2px;background:#b8b8b8;"></div>
<div style="left:2px;top:669px;width:1622px;height:247px;border-radius:8px;background:#10113f;"></div>
<div style="left:3px;top:670px;width:1620px;height:245px;border-radius:7px;border:1px solid rgba(168,172,226,.88);background:linear-gradient(97deg,#43458a 0%,#3b3d83 12%,#2d2f76 40%,#2a2c73 62%,#3a3c82 86%,#43458a 95%,#3a3c82 100%);"></div>
<div style="left:8px;top:697px;width:1610px;height:213px;border-radius:2px;border:1px solid rgba(172,176,228,.8);"></div>
<div style="left:9px;top:698px;width:1608px;height:211px;border-radius:1px;background:#191a52;"></div>
<div style="left:14px;top:675px;width:150px;height:19px;border-radius:10px;background:rgba(200,204,242,.42);filter:blur(6px);"></div>
<svg style="left:10px;top:675px;" width="18" height="18" viewBox="0 0 16 16"><path d="M4 2 H14 V14 H4 Z" fill="#fff" stroke="#8fb7c6" stroke-width=".6"/><path d="M3.5 2.5 H13 V13 H3.5 Z" fill="#9fd8e4"/><path d="M3.5 2.5 L1 13 H3.5 Z" fill="#c8ecf2"/><path d="M3.5 4.5 H13 M3.5 6.5 H13 M3.5 8.5 H13 M3.5 10.5 H13" stroke="#7cc3d4" stroke-width=".7"/><path d="M4.5 1 v2 M6.5 1 v2 M8.5 1 v2 M10.5 1 v2 M12.5 1 v2" stroke="#555" stroke-width=".8"/></svg>
<span class="t" style="top:676.5px;line-height:16px;font-size:12px;color:#000;letter-spacing:0.086px;left:31px;text-shadow:0 0 6px rgba(255,255,255,.6),0 0 10px rgba(255,255,255,.4);">script.txt - Bloc-notes</span>
<div style="left:1513px;top:670px;width:105px;height:20px;border:1px solid rgba(190,194,235,.85);border-top:none;border-radius:0 0 5px 5px;background:linear-gradient(180deg,rgba(120,124,180,.38),rgba(95,99,160,.30));box-shadow:0 0 0 1px rgba(20,20,70,.55);"></div>
<div style="left:1542px;top:670px;width:1px;height:19px;background:rgba(190,194,235,.85);"></div>
<div style="left:1543px;top:670px;width:1px;height:19px;background:rgba(20,20,70,.45);"></div>
<div style="left:1569px;top:670px;width:1px;height:19px;background:rgba(190,194,235,.85);"></div>
<div style="left:1570px;top:670px;width:1px;height:19px;background:rgba(20,20,70,.45);"></div>
<svg style="left:1523px;top:679px;" width="13" height="6" viewBox="0 0 13 6"><rect x="1" y="1" width="10" height="3.6" fill="#fff" stroke="#33355e" stroke-width="1"/></svg>
<svg style="left:1550px;top:674px;" width="12" height="11" viewBox="0 0 12 11"><rect x="2" y="2" width="8" height="6.5" fill="none" stroke="#33355e" stroke-width="3.4"/><rect x="2" y="2" width="8" height="6.5" fill="none" stroke="#fff" stroke-width="2"/></svg>
<svg style="left:1588px;top:674px;" width="13" height="11" viewBox="0 0 13 11"><path d="M2 1.5 L10.5 9 M10.5 1.5 L2 9" stroke="#33355e" stroke-width="4" fill="none"/><path d="M2.4 1.9 L10.1 8.6 M10.1 1.9 L2.4 8.6" stroke="#fff" stroke-width="2.5" fill="none"/></svg>
<div style="left:10px;top:699px;width:1606px;height:209px;background:#fff;"></div>
<div style="left:10px;top:699px;width:1606px;height:20px;background:linear-gradient(180deg,#ffffff 0,#fbfcfe 35%,#e1e6f4 45%,#d8deef 80%,#e6eaf5 100%);"></div>
<div style="left:10px;top:719px;width:1606px;height:1px;background:#b6bccc;"></div>
<span class="t" style="top:701px;line-height:16px;font-size:12px;color:#5c5c5c;letter-spacing:-0.145px;left:17px;">Fichier</span>
<span class="t" style="top:701px;line-height:16px;font-size:12px;color:#5c5c5c;letter-spacing:0.042px;left:66px;">Edition</span>
<span class="t" style="top:701px;line-height:16px;font-size:12px;color:#5c5c5c;letter-spacing:-0.003px;left:117px;">Format</span>
<span class="t" style="top:701px;line-height:16px;font-size:12px;color:#5c5c5c;letter-spacing:0.130px;left:169px;">Affichage</span>
<span class="t" style="top:701px;line-height:16px;font-size:12px;color:#5c5c5c;left:234px;">?</span>
<div style="left:10px;top:720px;width:1606px;height:1px;background:#e3e3e3;"></div>
<div class="clip" style="left:11px;top:721px;width:1587px;height:169px;"><div style="left:-11px;top:-721px;width:1634px;height:925px">
<span class="t" style="top:722px;line-height:13px;font-size:13.333px;color:#000;font-family:'Liberation Mono',monospace;left:13px;"># Automatically abort script on errors</span>
<span class="t" style="top:735px;line-height:13px;font-size:13.333px;color:#000;font-family:'Liberation Mono',monospace;left:13px;">option batch abort</span>
<span class="t" style="top:748px;line-height:13px;font-size:13.333px;color:#000;font-family:'Liberation Mono',monospace;left:13px;"># Disable overwrite confirmations that conflict with the previous</span>
<span class="t" style="top:761px;line-height:13px;font-size:13.333px;color:#000;font-family:'Liberation Mono',monospace;left:13px;">option confirm off</span>
<span class="t" style="top:774px;line-height:13px;font-size:13.333px;color:#000;font-family:'Liberation Mono',monospace;left:13px;"># Connect using a password</span>
<span class="t" style="top:787px;line-height:13px;font-size:13.333px;color:#000;font-family:'Liberation Mono',monospace;left:13px;">open ftp://            @192.168.1.99</span>
<span class="t" style="top:800px;line-height:13px;font-size:13.333px;color:#000;font-family:'Liberation Mono',monospace;left:13px;">cd &quot;BD_WINCIEL/DOCUMENTS/A0000132/SOURCE/INFOPRO7/soc044/HTML/Moniteurs/Hyundai/Hyundai 21 G210 1600X1200 _25  ComputerHQ_com_fichiers/&quot;</span>
<span class="t" style="top:813px;line-height:13px;font-size:13.333px;color:#000;font-family:'Liberation Mono',monospace;left:13px;">put &quot;C:\Infopro10\BD\BD_WINCIEL\DOCUMENTS\A0000132\SOURCE\INFOPRO7\soc044\HTML\Moniteurs\Hyundai\Hyundai 21 G210 1600X1200 _25  ComputerHQ_com_fichiers\Got+questions%3F.png&quot;</span>
<span class="t" style="top:826px;line-height:13px;font-size:13.333px;color:#000;font-family:'Liberation Mono',monospace;left:13px;"># Disconnect</span>
<span class="t" style="top:839px;line-height:13px;font-size:13.333px;color:#000;font-family:'Liberation Mono',monospace;left:13px;">close</span>
<span class="t" style="top:852px;line-height:13px;font-size:13.333px;color:#000;font-family:'Liberation Mono',monospace;left:13px;"># Exit WinSCP</span>
<span class="t" style="top:865px;line-height:13px;font-size:13.333px;color:#000;font-family:'Liberation Mono',monospace;left:13px;">exit</span>
<div style="left:97px;top:785px;width:102px;height:15px;background:#566bec;"></div>
</div></div>
<div style="left:1598px;top:721px;width:16px;height:169px;background:linear-gradient(90deg,#e6e6e6,#f4f4f4 40%,#f1f1f1);"></div>
<svg style="left:1602px;top:727px;" width="7" height="4" viewBox="0 0 7 4"><path d="M0 4 H7 L3.5 0 Z" fill="#404040"/></svg>
<svg style="left:1602px;top:880px;" width="7" height="4" viewBox="0 0 7 4"><path d="M0 0 H7 L3.5 4 Z" fill="#404040"/></svg>
<div style="left:1599px;top:739px;width:14px;height:120px;border:1px solid #979797;border-radius:2px;background:linear-gradient(90deg,#f5f5f5,#e6e6e6 45%,#cfcfcf 55%,#d8d8d8);"></div>
<div style="left:1603px;top:797px;width:6px;height:1px;background:#6a6a6a;"></div>
<div style="left:1603px;top:799px;width:6px;height:1px;background:#6a6a6a;"></div>
<div style="left:1603px;top:801px;width:6px;height:1px;background:#6a6a6a;"></div>
<div style="left:11px;top:890px;width:1587px;height:16px;background:linear-gradient(180deg,#e6e6e6,#f4f4f4 40%,#f1f1f1);"></div>
<svg style="left:17px;top:894px;" width="4" height="7" viewBox="0 0 4 7"><path d="M4 0 V7 L0 3.5 Z" fill="#a8a8a8"/></svg>
<svg style="left:1588px;top:894px;" width="4" height="7" viewBox="0 0 4 7"><path d="M0 0 V7 L4 3.5 Z" fill="#a8a8a8"/></svg>
<div style="left:1598px;top:890px;width:16px;height:16px;background:#f0f0f0;"></div>
<div style="left:1610px;top:902px;width:2px;height:2px;background:#b8b8b8;"></div>
<div style="left:1607px;top:902px;width:2px;height:2px;background:#b8b8b8;"></div>
<div style="left:1604px;top:902px;width:2px;height:2px;background:#b8b8b8;"></div>
<div style="left:1610px;top:899px;width:2px;height:2px;background:#b8b8b8;"></div>
<div style="left:1607px;top:899px;width:2px;height:2px;background:#b8b8b8;"></div>
<div style="left:1610px;top:896px;width:2px;height:2px;background:#b8b8b8;"></div>
<div style="left:736px;top:36px;width:880px;height:447px;border-radius:8px;background:#23253c;box-shadow:0 1px 4px rgba(0,0,0,.5),0 0 2px rgba(0,0,0,.4);"></div>
<div style="left:737px;top:37px;width:878px;height:445px;border-radius:7px;border:1px solid rgba(168,172,226,.88);background:linear-gradient(90deg,#eefbfc 0,#ecfafc 326px,#e4f2fa 356px,#8e98c8 363px,#39408a 371px,#2b2e75 379px,#2a2d74 60%,#31347b 82%,#3b3e84 94%,#34377d 100%);"></div>
<div style="left:742px;top:99px;width:868px;height:378px;border-radius:2px;border:1px solid rgba(228,232,250,.8);"></div>
<div style="left:743px;top:100px;width:866px;height:376px;border-radius:1px;background:rgba(30,32,52,.72);"></div>
<div style="left:1257px;top:38px;width:5px;height:62px;background:rgba(90,60,220,.2);filter:blur(1.2px);"></div>
<div style="left:1344px;top:38px;width:5px;height:62px;background:rgba(150,40,140,.16);filter:blur(1.2px);"></div>
<div style="left:1418px;top:38px;width:5px;height:62px;background:rgba(90,60,220,.2);filter:blur(1.2px);"></div>
<div style="left:1578px;top:38px;width:5px;height:62px;background:rgba(90,60,220,.18);filter:blur(1.2px);"></div>
<div style="left:1505px;top:37px;width:105px;height:20px;border:1px solid rgba(190,194,235,.85);border-top:none;border-radius:0 0 5px 5px;background:linear-gradient(180deg,rgba(120,124,180,.38),rgba(95,99,160,.30));box-shadow:0 0 0 1px rgba(20,20,70,.55);"></div>
<div style="left:1535px;top:37px;width:1px;height:19px;background:rgba(190,194,235,.85);"></div>
<div style="left:1536px;top:37px;width:1px;height:19px;background:rgba(20,20,70,.45);"></div>
<div style="left:1562px;top:37px;width:1px;height:19px;background:rgba(190,194,235,.85);"></div>
<div style="left:1563px;top:37px;width:1px;height:19px;background:rgba(20,20,70,.45);"></div>
<svg style="left:1516px;top:46px;" width="13" height="6" viewBox="0 0 13 6"><rect x="1" y="1" width="10" height="3.6" fill="#fff" stroke="#33355e" stroke-width="1"/></svg>
<svg style="left:1543px;top:41px;" width="12" height="11" viewBox="0 0 12 11"><rect x="2" y="2" width="8" height="6.5" fill="none" stroke="#33355e" stroke-width="3.4"/><rect x="2" y="2" width="8" height="6.5" fill="none" stroke="#fff" stroke-width="2"/></svg>
<svg style="left:1581px;top:41px;" width="13" height="11" viewBox="0 0 13 11"><path d="M2 1.5 L10.5 9 M10.5 1.5 L2 9" stroke="#33355e" stroke-width="4" fill="none"/><path d="M2.4 1.9 L10.1 8.6 M10.1 1.9 L2.4 8.6" stroke="#fff" stroke-width="2.5" fill="none"/></svg>
<svg style="left:745px;top:68px;" width="70" height="28" viewBox="0 0 70 28"><defs><radialGradient id="bk" cx=".5" cy=".25" r=".8"><stop offset="0" stop-color="#8cc0f8"/><stop offset=".45" stop-color="#2a6fd6"/><stop offset=".8" stop-color="#0f3690"/><stop offset="1" stop-color="#0b2a78"/></radialGradient><linearGradient id="fw" x1="0" y1="0" x2="0" y2="1"><stop offset="0" stop-color="#ffffff"/><stop offset=".5" stop-color="#e4e9ee"/><stop offset="1" stop-color="#f6f8fa"/></linearGradient></defs><path d="M14 1.5 a12.5 12.5 0 1 0 .01 0 Z M42 1.5 a12.5 12.5 0 1 0 .01 0 Z" fill="#d9e4ec" stroke="#a9b6c2" stroke-width=".8" opacity=".8"/><rect x="14" y="3.5" width="28" height="21" fill="#dfe8ef" opacity=".8"/><circle cx="14" cy="14" r="11.3" fill="url(#bk)" stroke="#16336e" stroke-width="1.2"/><path d="M3.5 11 A11 11 0 0 1 24.5 11 C20 7.5 8 7.5 3.5 11 Z" fill="#fff" opacity=".35"/><path d="M7 14 L13.5 8 V11.8 H21 V16.2 H13.5 V20 Z" fill="#fff" stroke="#1d4a9c" stroke-width=".6"/><circle cx="42" cy="14" r="11.3" fill="url(#fw)" stroke="#9aa6b3" stroke-width="1.2"/><path d="M49 14 L42.5 8 V11.8 H35 V16.2 H42.5 V20 Z" fill="#f4f6f8" stroke="#c3cbd3" stroke-width=".8"/><path d="M58 12 H66 L62 16.5 Z" fill="#2f6fd0" stroke="#1e4a9a" stroke-width=".6"/></svg>
<div style="left:815px;top:71px;width:684px;height:22px;border:1px solid rgba(58,62,84,.72);border-radius:2px;background:rgba(255,255,255,.74);box-shadow:inset 0 1px 0 rgba(255,255,255,.35);"></div>
<svg style="left:818px;top:73px;" width="16" height="16" viewBox="0 0 16 16"><defs><linearGradient id="fa" x1="0" x2="1"><stop offset="0" stop-color="#fbf3c2"/><stop offset=".6" stop-color="#f2e08c"/><stop offset="1" stop-color="#e6cc62"/></linearGradient><linearGradient id="fb" x1="0" x2="1"><stop offset="0" stop-color="#f7e99e"/><stop offset=".5" stop-color="#ecd36c"/><stop offset="1" stop-color="#dcbc4c"/></linearGradient></defs><path d="M1.6 1.6 L7.4 .6 L7.6 14.4 L1.8 15.4 Z" fill="url(#fa)" stroke="#dcc45e" stroke-width=".7"/><path d="M6.6 1.4 L12.2 .8 L12.8 14.2 L7 15.6 Z" fill="url(#fb)" stroke="#cfb24a" stroke-width=".7"/><path d="M12.4 7.4 L13.8 7.8 L13.8 12.6 L12.6 12.8 Z" fill="#efe2a4" stroke="#cdb55a" stroke-width=".5"/><rect x="12.7" y="10.8" width=".9" height="1.6" fill="#6faa58"/></svg>
<span class="t" style="top:74px;line-height:16px;font-size:13px;color:#2b2b2b;left:840px;">«</span>
<span class="t" style="top:74.5px;line-height:16px;font-size:12px;color:#2b2b2b;letter-spacing:-0.168px;left:855px;">HTML</span>
<span class="t" style="top:74.5px;line-height:16px;font-size:12px;color:#2b2b2b;letter-spacing:0.146px;left:911px;">Moniteurs</span>
<span class="t" style="top:74.5px;line-height:16px;font-size:12px;color:#2b2b2b;letter-spacing:0.138px;left:988px;">Hyundai</span>
<span class="t" style="top:74.5px;line-height:16px;font-size:12px;color:#2b2b2b;letter-spacing:-0.265px;left:1056px;">Hyundai 21 G210 </span>
<span class="t" style="top:74.5px;line-height:16px;font-size:12px;color:#2b2b2b;letter-spacing:-0.623px;left:1148.5px;">1600X1200 </span>
<span class="t" style="top:74.5px;line-height:16px;font-size:12px;color:#2b2b2b;letter-spacing:-0.801px;left:1207px;">_25  </span>
<span class="t" style="top:74.5px;line-height:16px;font-size:12px;color:#2b2b2b;letter-spacing:-0.062px;left:1229.7px;">ComputerHQ_com_fichiers</span>
<svg style="left:897px;top:78px;" width="5" height="8" viewBox="0 0 5 8"><path d="M0 0 L4.5 4 L0 8 Z" fill="#111"/></svg>
<svg style="left:975px;top:78px;" width="5" height="8" viewBox="0 0 5 8"><path d="M0 0 L4.5 4 L0 8 Z" fill="#111"/></svg>
<svg style="left:1043px;top:78px;" width="5" height="8" viewBox="0 0 5 8"><path d="M0 0 L4.5 4 L0 8 Z" fill="#111"/></svg>
<svg style="left:1458px;top:80px;" width="7" height="4" viewBox="0 0 7 4"><path d="M0 0 H7 L3.5 4 Z" fill="#111"/></svg>
<div style="left:1473px;top:72px;width:1px;height:20px;background:#777c90;"></div>
<svg style="left:1477px;top:74px;" width="19" height="16" viewBox="0 0 19 16"><path d="M2 7.5 L6.5 2 L8 6 L10 4.5 L8.8 9 Z" fill="#3f8fe0" stroke="#1c5fb0" stroke-width=".6"/><path d="M17 8.5 L12.5 14 L11 10 L9 11.5 L10.2 7 Z" fill="#3f8fe0" stroke="#1c5fb0" stroke-width=".6"/></svg>
<div style="left:1505px;top:71px;width:102px;height:22px;border:1px solid rgba(58,62,84,.72);border-radius:2px;background:rgba(255,255,255,.74);box-shadow:inset 0 1px 0 rgba(255,255,255,.35);"></div>
<span class="t" style="top:75px;line-height:16px;font-size:12px;color:#6e6e6e;font-style:italic;letter-spacing:-0.200px;left:1514px;">Rechercher...</span>
<svg style="left:1587px;top:75px;" width="14" height="14" viewBox="0 0 14 14"><circle cx="8.5" cy="5.5" r="3.8" fill="#e9f3fc" stroke="#3f7fd0" stroke-width="1.6"/><path d="M5.8 8.2 L1.5 12.5" stroke="#3f7fd0" stroke-width="2.2" stroke-linecap="round"/></svg>
<div style="left:744px;top:101px;width:864px;height:374px;background:#fff;"></div>
<div style="left:744px;top:101px;width:864px;height:31px;background:linear-gradient(180deg,#fafcfe 0,#eef3fa 45%,#dfe8f4 55%,#dce5f2 100%);border-bottom:1px solid #a9b8cc;"></div>
<span class="t" style="top:108.5px;line-height:16px;font-size:12px;color:#1e3350;letter-spacing:-0.188px;left:762px;">Organiser</span>
<svg style="left:820px;top:114px;" width="7" height="4" viewBox="0 0 7 4"><path d="M0 0 H7 L3.5 4 Z" fill="#1e3350"/></svg>
<span class="t" style="top:108.5px;line-height:16px;font-size:12px;color:#1e3350;letter-spacing:0.289px;left:877px;">Modifier</span>
<svg style="left:932px;top:114px;" width="7" height="4" viewBox="0 0 7 4"><path d="M0 0 H7 L3.5 4 Z" fill="#1e3350"/></svg>
<span class="t" style="top:108.5px;line-height:16px;font-size:12px;color:#1e3350;letter-spacing:-0.286px;left:970px;">Partager avec</span>
<svg style="left:1048px;top:114px;" width="7" height="4" viewBox="0 0 7 4"><path d="M0 0 H7 L3.5 4 Z" fill="#1e3350"/></svg>
<span class="t" style="top:108.5px;line-height:16px;font-size:12px;color:#1e3350;letter-spacing:-0.078px;left:1085px;">Diaporama</span>
<span class="t" style="top:108.5px;line-height:16px;font-size:12px;color:#1e3350;letter-spacing:0.332px;left:1172px;">Imprimer</span>
<span class="t" style="top:108.5px;line-height:16px;font-size:12px;color:#1e3350;letter-spacing:-0.003px;left:1252px;">Courrier électronique</span>
<span class="t" style="top:108.5px;line-height:16px;font-size:12px;color:#1e3350;letter-spacing:-0.448px;left:1394px;">Graver</span>
<svg style="left:856px;top:108px;" width="18" height="16" viewBox="0 0 18 16"><path d="M2 10 C1 5 6 2.5 10 3.5 C14 4.5 14 9 11 9.5 C9 10 10 12.5 7.5 13 C5 13.5 2.5 12.5 2 10 Z" fill="#e9e4da" stroke="#8a8478" stroke-width=".8"/><circle cx="5" cy="7" r="1.2" fill="#d8443c"/><circle cx="8" cy="5.5" r="1.2" fill="#3f8fe0"/><circle cx="5.5" cy="10.5" r="1.2" fill="#5bbf58"/><circle cx="11" cy="6.5" r="1.1" fill="#f2c230"/><path d="M14.5 .5 L16 2 L11.5 12.5 L10 12 Z" fill="#e89a3c" stroke="#a86a1a" stroke-width=".5"/></svg>
<span class="t" style="top:108px;line-height:16px;font-size:13px;color:#1e3350;left:1451px;">»</span>
<svg style="left:1486px;top:108px;" width="17" height="16" viewBox="0 0 17 16"><g stroke="#7b8aa0" stroke-width=".9" fill="#fff"><rect x="1" y="2" width="3" height="3"/><rect x="1" y="6.5" width="3" height="3"/><rect x="1" y="11" width="3" height="3"/></g><path d="M6 3.5 h9 M6 8 h9 M6 12.5 h9" stroke="#7b8aa0" stroke-width="1.2" stroke-dasharray="3 1"/></svg>
<svg style="left:1512px;top:114px;" width="7" height="4" viewBox="0 0 7 4"><path d="M0 0 H7 L3.5 4 Z" fill="#1e3350"/></svg>
<svg style="left:1541px;top:108px;" width="17" height="16" viewBox="0 0 17 16"><rect x=".5" y="1.5" width="15" height="13" fill="#fff" stroke="#5b7596"/><rect x="9.5" y="3" width="5" height="10" fill="#7cc0e8" stroke="#4f90c0" stroke-width=".6"/></svg>
<svg style="left:1576px;top:107px;" width="18" height="18" viewBox="0 0 18 18"><defs><radialGradient id="hp" cx=".5" cy=".3" r=".8"><stop offset="0" stop-color="#8fc0f5"/><stop offset=".6" stop-color="#2f6fd6"/><stop offset="1" stop-color="#1a3f9c"/></radialGradient></defs><circle cx="9" cy="9" r="7.8" fill="url(#hp)" stroke="#1c3f8c" stroke-width="1"/><text x="9" y="13.4" font-family="Liberation Sans" font-weight="bold" font-size="12" fill="#fff" text-anchor="middle">?</text></svg>
<div class="clip" style="left:744px;top:132px;width:141px;height:290px;"><div style="left:-744px;top:-132px;width:1634px;height:925px">
<svg style="left:762px;top:142px;" width="18" height="18" viewBox="0 0 18 18"><path d="M9 1 L11.4 6.3 L17.2 6.9 L12.9 10.8 L14.1 16.5 L9 13.6 L3.9 16.5 L5.1 10.8 L.8 6.9 L6.6 6.3 Z" fill="#f8c84a" stroke="#e09a28" stroke-width="1"/><path d="M9 3.5 L10.6 7.3 L14.5 7.7 L9 9.5 Z" fill="#fdeeb0"/></svg>
<span class="t" style="top:144px;line-height:16px;font-size:12px;color:#111;letter-spacing:-0.335px;left:785px;">Favoris</span>
<svg style="left:774px;top:164px;" width="16" height="16" viewBox="0 0 16 16"><rect x=".5" y="2.5" width="15" height="11" fill="#2a5fc4" stroke="#1e2d55"/><path d="M1 3 H15 V8 C10 6 6 10 1 8 Z" fill="#5a93e6"/><rect x=".5" y="11.5" width="15" height="2" fill="#1c2a4c"/></svg>
<span class="t" style="top:165px;line-height:16px;font-size:12px;color:#111;letter-spacing:-0.284px;left:795px;">Bureau</span>
<svg style="left:774px;top:185px;" width="16" height="16" viewBox="0 0 16 16"><path d="M4.5 1 L8 3.3 L4.5 5.6 L1 3.3 Z M11.5 1 L15 3.3 L11.5 5.6 L8 3.3 Z M4.5 5.6 L8 7.9 L4.5 10.2 L1 7.9 Z M11.5 5.6 L15 7.9 L11.5 10.2 L8 7.9 Z M8 9 L11.2 11.1 L8 13.4 L4.8 11.1 Z" fill="#4d9be6" stroke="#a8d0f5" stroke-width=".5"/></svg>
<span class="t" style="top:186px;line-height:16px;font-size:12px;color:#111;letter-spacing:-0.051px;left:795px;">Dropbox</span>
<svg style="left:774px;top:206px;" width="16" height="16" viewBox="0 0 16 16"><rect x="4" y="4" width="10" height="8" fill="#e9eef5" stroke="#7d8794" stroke-width=".9"/><rect x="5.5" y="5.5" width="3" height="2.5" fill="#5a93e6"/><rect x="9.5" y="8" width="3" height="2.5" fill="#5a93e6"/><path d="M2.5 13.5 H15.5 V15 H2.5 Z" fill="#b9c0ca" stroke="#7d8794" stroke-width=".6"/><circle cx="4" cy="4" r="3.2" fill="#fff" stroke="#7d8794" stroke-width=".8"/><path d="M4 2 V4 H5.6" stroke="#555" stroke-width=".8" fill="none"/></svg>
<span class="t" style="top:207px;line-height:16px;font-size:12px;color:#111;letter-spacing:-0.253px;left:795px;">Emplacements récents</span>
<svg style="left:774px;top:227px;" width="16" height="16" viewBox="0 0 16 16"><defs><linearGradient id="fa" x1="0" x2="1"><stop offset="0" stop-color="#fbf3c2"/><stop offset=".6" stop-color="#f2e08c"/><stop offset="1" stop-color="#e6cc62"/></linearGradient><linearGradient id="fb" x1="0" x2="1"><stop offset="0" stop-color="#f7e99e"/><stop offset=".5" stop-color="#ecd36c"/><stop offset="1" stop-color="#dcbc4c"/></linearGradient></defs><path d="M1.6 1.6 L7.4 .6 L7.6 14.4 L1.8 15.4 Z" fill="url(#fa)" stroke="#dcc45e" stroke-width=".7"/><path d="M6.6 1.4 L12.2 .8 L12.8 14.2 L7 15.6 Z" fill="url(#fb)" stroke="#cfb24a" stroke-width=".7"/><path d="M12.4 7.4 L13.8 7.8 L13.8 12.6 L12.6 12.8 Z" fill="#efe2a4" stroke="#cdb55a" stroke-width=".5"/><rect x="12.7" y="10.8" width=".9" height="1.6" fill="#6faa58"/><path d="M9 7 H13 V10.5 H15.5 L11 15.5 L6.5 10.5 H9 Z" fill="#2f8fe6" stroke="#1c62b0" stroke-width=".7"/></svg>
<span class="t" style="top:228px;line-height:16px;font-size:12px;color:#111;letter-spacing:0.019px;left:795px;">Téléchargements</span>
<svg style="left:774px;top:248px;" width="16" height="16" viewBox="0 0 16 16"><rect x=".5" y=".5" width="15" height="15" rx="3.5" fill="#f6f6f6" stroke="#c9c9c9"/><circle cx="8" cy="4.6" r="2.6" fill="#f5a623" opacity=".85"/><circle cx="11.2" cy="6.6" r="2.6" fill="#e8453c" opacity=".8"/><circle cx="10.2" cy="10.4" r="2.6" fill="#a44fc8" opacity=".8"/><circle cx="5.8" cy="10.4" r="2.6" fill="#3f8fe0" opacity=".8"/><circle cx="4.8" cy="6.6" r="2.6" fill="#6cc04a" opacity=".8"/></svg>
<span class="t" style="top:249px;line-height:16px;font-size:12px;color:#111;letter-spacing:-0.055px;left:795px;">Photos iCloud</span>
<svg style="left:763px;top:291px;" width="18" height="16" viewBox="0 0 18 16"><path d="M1 2.5 H6 L7.5 4 H16 V12 H1 Z" fill="#f3d36b" stroke="#c9a53a" stroke-width=".8"/><path d="M2 6 H15.5 L14.5 14.5 H3 Z" fill="#9fc6ea" stroke="#5f8fc0" stroke-width=".8"/><path d="M4.5 10 H13 V14.5 H4.5 Z" fill="#e9f1fa" stroke="#7da3cc" stroke-width=".7"/></svg>
<span class="t" style="top:291px;line-height:16px;font-size:12px;color:#111;letter-spacing:-0.082px;left:785px;">Bibliothèques</span>
<svg style="left:774px;top:311px;" width="16" height="16" viewBox="0 0 16 16"><path d="M2.5 .5 H10.5 L13.5 3.5 V15.5 H2.5 Z" fill="#fff" stroke="#8d96a3"/><path d="M4.5 5.5 h3 M4.5 7.5 h3 M4.5 9.5 h7 M4.5 11.5 h7 M4.5 13.5 h5" stroke="#7f9cc4" stroke-width="1"/><rect x="8.5" y="5" width="3.4" height="3.2" fill="#4a83d8"/></svg>
<span class="t" style="top:312px;line-height:16px;font-size:12px;color:#111;letter-spacing:-0.078px;left:795px;">Documents</span>
<svg style="left:774px;top:333px;" width="16" height="16" viewBox="0 0 16 16"><defs><linearGradient id="sk" x1="0" y1="0" x2="1" y2="1"><stop offset="0" stop-color="#5fa6dc"/><stop offset=".6" stop-color="#bfe3f2"/><stop offset="1" stop-color="#e8f6fa"/></linearGradient></defs><rect x=".5" y="1.5" width="15" height="13" fill="#f3f5f7" stroke="#b7bec6"/><rect x="2" y="3" width="12" height="10" fill="url(#sk)"/><path d="M2 13 L2 8.2 L5.5 7 L9 9.2 L14 8.4 L14 13 Z" fill="#1f666c"/><path d="M2 13 L2 11 L7 10.2 L14 11.4 L14 13 Z" fill="#6fbccc"/></svg>
<span class="t" style="top:333px;line-height:16px;font-size:12px;color:#111;letter-spacing:-0.393px;left:795px;">Images</span>
<svg style="left:774px;top:353px;" width="16" height="16" viewBox="0 0 16 16"><path d="M8.5 1 C10 3.5 13 4 12.5 8 C12 5.8 10.5 5.5 9.5 5.2 V12" fill="none" stroke="#3f8fe0" stroke-width="1.8"/><ellipse cx="6.4" cy="12.2" rx="3.6" ry="2.8" fill="#3f8fe0" stroke="#2367b8" stroke-width=".6"/><ellipse cx="5.4" cy="11.4" rx="1.5" ry="1" fill="#a8d0f5"/></svg>
<span class="t" style="top:354px;line-height:16px;font-size:12px;color:#111;letter-spacing:-0.051px;left:795px;">Musique</span>
<svg style="left:774px;top:374px;" width="16" height="16" viewBox="0 0 16 16"><rect x="1" y="1" width="14" height="14" fill="#3a4150" stroke="#222835"/><rect x="4" y="2" width="8" height="5.5" fill="#6aa0d8"/><rect x="4" y="8.5" width="8" height="5.5" fill="#7bb488"/><path d="M2.5 2 v12 M13.5 2 v12" stroke="#e8e8e8" stroke-width="1.4" stroke-dasharray="1.6 1.4"/></svg>
<span class="t" style="top:375px;line-height:16px;font-size:12px;color:#111;letter-spacing:-0.414px;left:795px;">Vidéos</span>
<svg style="left:763px;top:416px;" width="16" height="16" viewBox="0 0 16 16"><rect x="1.5" y="1.5" width="13" height="9.5" fill="#3f7ad6" stroke="#3a4558"/><path d="M5 14.5 H11 M8 11 V14.5" stroke="#3a4558" stroke-width="1.6"/></svg>
<span class="t" style="top:417px;line-height:16px;font-size:12px;color:#111;letter-spacing:0.330px;left:785px;">Ordinateur</span>
</div></div>
<div style="left:885px;top:132px;width:16px;height:290px;background:linear-gradient(90deg,#e6e6e6,#f4f4f4 40%,#f1f1f1);"></div>
<svg style="left:889px;top:138px;" width="7" height="4" viewBox="0 0 7 4"><path d="M0 4 H7 L3.5 0 Z" fill="#404040"/></svg>
<svg style="left:889px;top:412px;" width="7" height="4" viewBox="0 0 7 4"><path d="M0 0 H7 L3.5 4 Z" fill="#404040"/></svg>
<div style="left:886px;top:150px;width:14px;height:121px;border:1px solid #979797;border-radius:2px;background:linear-gradient(90deg,#f5f5f5,#e6e6e6 45%,#cfcfcf 55%,#d8d8d8);"></div>
<div style="left:890px;top:208px;width:6px;height:1px;background:#6a6a6a;"></div>
<div style="left:890px;top:210px;width:6px;height:1px;background:#6a6a6a;"></div>
<div style="left:890px;top:212px;width:6px;height:1px;background:#6a6a6a;"></div>
<div style="left:901px;top:132px;width:2px;height:290px;background:#fff;"></div>
<span class="t" style="top:138px;line-height:16px;font-size:12px;color:#566272;letter-spacing:0.219px;left:921px;">Nom</span>
<span class="t" style="top:138px;line-height:16px;font-size:12px;color:#566272;letter-spacing:-0.340px;left:1179px;">Date</span>
<span class="t" style="top:138px;line-height:16px;font-size:12px;color:#566272;letter-spacing:-0.254px;left:1339px;">Type</span>
<span class="t" style="top:138px;line-height:16px;font-size:12px;color:#566272;letter-spacing:0.107px;left:1459px;">Taille</span>
<div class="clip" style="left:1533px;top:132px;width:59px;height:26px;"><div style="left:-1533px;top:-132px;width:1634px;height:925px">
<span class="t" style="top:138px;line-height:16px;font-size:12px;color:#566272;letter-spacing:0.073px;left:1539px;">Mots-clés</span>
</div></div>
<div style="left:1172px;top:132px;width:1px;height:25px;background:linear-gradient(180deg,#fff,#e3e8ee 50%,#fff);"></div>
<div style="left:1332px;top:132px;width:1px;height:25px;background:linear-gradient(180deg,#fff,#e3e8ee 50%,#fff);"></div>
<div style="left:1452px;top:132px;width:1px;height:25px;background:linear-gradient(180deg,#fff,#e3e8ee 50%,#fff);"></div>
<div style="left:1532px;top:132px;width:1px;height:25px;background:linear-gradient(180deg,#fff,#e3e8ee 50%,#fff);"></div>
<svg style="left:1039px;top:133px;" width="7" height="4" viewBox="0 0 7 4"><path d="M0 4 L3.5 0 L7 4 Z" fill="#6d8bb0"/></svg>
<div class="clip" style="left:903px;top:157px;width:689px;height:249px;"><div style="left:-903px;top:-157px;width:1634px;height:925px">
<div style="left:917px;top:241px;width:674px;height:22px;border:1px solid #d9d9d9;border-radius:3px;background:linear-gradient(180deg,#f7f7f7,#e7e7e7);"></div>
<svg style="left:922px;top:159px;" width="16" height="16" viewBox="0 0 16 16"><path d="M2.5 .5 H10.5 L13.5 3.5 V15.5 H2.5 Z" fill="#fdfdfd" stroke="#9aa0a8"/><path d="M10.5 .5 V3.5 H13.5" fill="#e8ebef" stroke="#9aa0a8"/><rect x="4.5" y="6" width="6.5" height="6" fill="#b9cfe6"/><path d="M4.5 12 L7 8.5 L9 10.5 L11 9 V12 Z" fill="#7fa76a"/><circle cx="9.4" cy="7.3" r="1.1" fill="#e8a33c"/></svg>
<span class="t" style="top:160px;line-height:16px;font-size:12px;color:#000;letter-spacing:-0.069px;left:942px;">BUY.png</span>
<span class="t" style="top:160px;line-height:16px;font-size:12px;color:#6d6d6d;letter-spacing:-0.339px;left:1179px;">26/07/2003 17:48</span>
<span class="t" style="top:160px;line-height:16px;font-size:12px;color:#6d6d6d;letter-spacing:-0.304px;left:1339px;">Fichier PNG</span>
<span class="t" style="top:160px;line-height:16px;font-size:12px;color:#6d6d6d;letter-spacing:-0.200px;right:110px;">1 Ko</span>
<svg style="left:922px;top:180px;" width="16" height="16" viewBox="0 0 16 16"><path d="M2.5 .5 H10.5 L13.5 3.5 V15.5 H2.5 Z" fill="#fdfdfd" stroke="#9aa0a8"/><path d="M10.5 .5 V3.5 H13.5" fill="#e8ebef" stroke="#9aa0a8"/><rect x="4.5" y="6" width="6.5" height="6" fill="#b9cfe6"/><path d="M4.5 12 L7 8.5 L9 10.5 L11 9 V12 Z" fill="#7fa76a"/><circle cx="9.4" cy="7.3" r="1.1" fill="#e8a33c"/></svg>
<span class="t" style="top:181px;line-height:16px;font-size:12px;color:#000;letter-spacing:-0.030px;left:942px;">Calculate.png</span>
<span class="t" style="top:181px;line-height:16px;font-size:12px;color:#6d6d6d;letter-spacing:-0.339px;left:1179px;">26/07/2003 17:48</span>
<span class="t" style="top:181px;line-height:16px;font-size:12px;color:#6d6d6d;letter-spacing:-0.304px;left:1339px;">Fichier PNG</span>
<span class="t" style="top:181px;line-height:16px;font-size:12px;color:#6d6d6d;letter-spacing:-0.200px;right:110px;">2 Ko</span>
<svg style="left:922px;top:201px;" width="16" height="16" viewBox="0 0 16 16"><path d="M2.5 .5 H10.5 L13.5 3.5 V15.5 H2.5 Z" fill="#fdfdfd" stroke="#9aa0a8"/><path d="M10.5 .5 V3.5 H13.5" fill="#e8ebef" stroke="#9aa0a8"/><rect x="4.5" y="6" width="6.5" height="6" fill="#b9cfe6"/><path d="M4.5 12 L7 8.5 L9 10.5 L11 9 V12 Z" fill="#7fa76a"/><circle cx="9.4" cy="7.3" r="1.1" fill="#e8a33c"/></svg>
<span class="t" style="top:202px;line-height:16px;font-size:12px;color:#000;letter-spacing:0.114px;left:942px;">Computer+hardware+%2D+Monitors.png</span>
<span class="t" style="top:202px;line-height:16px;font-size:12px;color:#6d6d6d;letter-spacing:-0.339px;left:1179px;">26/07/2003 17:48</span>
<span class="t" style="top:202px;line-height:16px;font-size:12px;color:#6d6d6d;letter-spacing:-0.304px;left:1339px;">Fichier PNG</span>
<span class="t" style="top:202px;line-height:16px;font-size:12px;color:#6d6d6d;letter-spacing:-0.200px;right:110px;">2 Ko</span>
<svg style="left:922px;top:222px;" width="16" height="16" viewBox="0 0 16 16"><rect x=".7" y=".7" width="14.6" height="14.6" fill="#fdfdf6" stroke="#222" stroke-width="1.2"/><path d="M11.5 3.6 C9 2 5 2.6 5 5 C5 7.6 11 7 11 10 C11 12.6 6.5 13.2 4 11.6" fill="none" stroke="#2a2a2a" stroke-width="3"/><path d="M11.5 3.6 C9 2 5 2.6 5 5 C5 7.6 11 7 11 10 C11 12.6 6.5 13.2 4 11.6" fill="none" stroke="#f2d21c" stroke-width="1.6"/></svg>
<span class="t" style="top:223px;line-height:16px;font-size:12px;color:#000;letter-spacing:-0.003px;left:942px;">global.js</span>
<span class="t" style="top:223px;line-height:16px;font-size:12px;color:#6d6d6d;letter-spacing:-0.339px;left:1179px;">26/07/2003 17:24</span>
<span class="t" style="top:223px;line-height:16px;font-size:12px;color:#6d6d6d;letter-spacing:-0.349px;left:1339px;">Fichier de script JS...</span>
<span class="t" style="top:223px;line-height:16px;font-size:12px;color:#6d6d6d;letter-spacing:-0.200px;right:110px;">2 Ko</span>
<svg style="left:922px;top:243px;" width="16" height="16" viewBox="0 0 16 16"><path d="M2.5 .5 H10.5 L13.5 3.5 V15.5 H2.5 Z" fill="#fdfdfd" stroke="#9aa0a8"/><path d="M10.5 .5 V3.5 H13.5" fill="#e8ebef" stroke="#9aa0a8"/><rect x="4.5" y="6" width="6.5" height="6" fill="#b9cfe6"/><path d="M4.5 12 L7 8.5 L9 10.5 L11 9 V12 Z" fill="#7fa76a"/><circle cx="9.4" cy="7.3" r="1.1" fill="#e8a33c"/></svg>
<span class="t" style="top:244px;line-height:16px;font-size:12px;color:#000;letter-spacing:-0.021px;left:942px;">Got+questions%3F.png</span>
<span class="t" style="top:244px;line-height:16px;font-size:12px;color:#6d6d6d;letter-spacing:-0.339px;left:1179px;">26/07/2003 17:48</span>
<span class="t" style="top:244px;line-height:16px;font-size:12px;color:#6d6d6d;letter-spacing:-0.304px;left:1339px;">Fichier PNG</span>
<span class="t" style="top:244px;line-height:16px;font-size:12px;color:#6d6d6d;letter-spacing:-0.200px;right:110px;">2 Ko</span>
<svg style="left:922px;top:264px;" width="16" height="16" viewBox="0 0 16 16"><defs><linearGradient id="gp" x1="0" y1="0" x2="1" y2="1"><stop offset="0" stop-color="#ffffff"/><stop offset=".55" stop-color="#dbe8f8"/><stop offset="1" stop-color="#8fb8ec"/></linearGradient></defs><path d="M3.5 1.5 H11.5 L14.5 4.5 V15.5 H3.5 Z" fill="url(#gp)" stroke="#6f93cc" stroke-width=".9"/><path d="M11.5 1.5 V4.5 H14.5" fill="#eaf2fb" stroke="#6f93cc" stroke-width=".7"/><rect x=".7" y=".7" width="8.4" height="8.4" fill="#fdf1f1" stroke="#a3262c" stroke-width="1.3"/><path d="M1.6 8.3 L3.8 5.4 L5.2 6.8 L6.3 5.8 L8.3 8.3 Z" fill="#a3262c"/><circle cx="4.2" cy="3.3" r="1" fill="#c23a40"/><path d="M6.5 10.5 L9.5 9.5 L10 11 Z" fill="#e8a33c"/></svg>
<span class="t" style="top:265px;line-height:16px;font-size:12px;color:#000;letter-spacing:0.287px;left:942px;">logo.gif</span>
<span class="t" style="top:265px;line-height:16px;font-size:12px;color:#6d6d6d;letter-spacing:-0.339px;left:1179px;">26/07/2003 17:24</span>
<span class="t" style="top:265px;line-height:16px;font-size:12px;color:#6d6d6d;letter-spacing:-0.521px;left:1339px;">Image GIF</span>
<span class="t" style="top:265px;line-height:16px;font-size:12px;color:#6d6d6d;letter-spacing:-0.200px;right:110px;">2 Ko</span>
<svg style="left:922px;top:285px;" width="16" height="16" viewBox="0 0 16 16"><defs><linearGradient id="gp" x1="0" y1="0" x2="1" y2="1"><stop offset="0" stop-color="#ffffff"/><stop offset=".55" stop-color="#dbe8f8"/><stop offset="1" stop-color="#8fb8ec"/></linearGradient></defs><path d="M3.5 1.5 H11.5 L14.5 4.5 V15.5 H3.5 Z" fill="url(#gp)" stroke="#6f93cc" stroke-width=".9"/><path d="M11.5 1.5 V4.5 H14.5" fill="#eaf2fb" stroke="#6f93cc" stroke-width=".7"/><rect x=".7" y=".7" width="8.4" height="8.4" fill="#fdf1f1" stroke="#a3262c" stroke-width="1.3"/><path d="M1.6 8.3 L3.8 5.4 L5.2 6.8 L6.3 5.8 L8.3 8.3 Z" fill="#a3262c"/><circle cx="4.2" cy="3.3" r="1" fill="#c23a40"/><path d="M6.5 10.5 L9.5 9.5 L10 11 Z" fill="#e8a33c"/></svg>
<span class="t" style="top:286px;line-height:16px;font-size:12px;color:#000;letter-spacing:0.207px;left:942px;">menu_account-off.gif</span>
<span class="t" style="top:286px;line-height:16px;font-size:12px;color:#6d6d6d;letter-spacing:-0.339px;left:1179px;">26/07/2003 17:24</span>
<span class="t" style="top:286px;line-height:16px;font-size:12px;color:#6d6d6d;letter-spacing:-0.521px;left:1339px;">Image GIF</span>
<span class="t" style="top:286px;line-height:16px;font-size:12px;color:#6d6d6d;letter-spacing:-0.200px;right:110px;">1 Ko</span>
<svg style="left:922px;top:306px;" width="16" height="16" viewBox="0 0 16 16"><defs><linearGradient id="gp" x1="0" y1="0" x2="1" y2="1"><stop offset="0" stop-color="#ffffff"/><stop offset=".55" stop-color="#dbe8f8"/><stop offset="1" stop-color="#8fb8ec"/></linearGradient></defs><path d="M3.5 1.5 H11.5 L14.5 4.5 V15.5 H3.5 Z" fill="url(#gp)" stroke="#6f93cc" stroke-width=".9"/><path d="M11.5 1.5 V4.5 H14.5" fill="#eaf2fb" stroke="#6f93cc" stroke-width=".7"/><rect x=".7" y=".7" width="8.4" height="8.4" fill="#fdf1f1" stroke="#a3262c" stroke-width="1.3"/><path d="M1.6 8.3 L3.8 5.4 L5.2 6.8 L6.3 5.8 L8.3 8.3 Z" fill="#a3262c"/><circle cx="4.2" cy="3.3" r="1" fill="#c23a40"/><path d="M6.5 10.5 L9.5 9.5 L10 11 Z" fill="#e8a33c"/></svg>
<span class="t" style="top:307px;line-height:16px;font-size:12px;color:#000;letter-spacing:0.150px;left:942px;">menu_cellular-off.gif</span>
<span class="t" style="top:307px;line-height:16px;font-size:12px;color:#6d6d6d;letter-spacing:-0.339px;left:1179px;">26/07/2003 17:24</span>
<span class="t" style="top:307px;line-height:16px;font-size:12px;color:#6d6d6d;letter-spacing:-0.521px;left:1339px;">Image GIF</span>
<span class="t" style="top:307px;line-height:16px;font-size:12px;color:#6d6d6d;letter-spacing:-0.200px;right:110px;">1 Ko</span>
<svg style="left:922px;top:327px;" width="16" height="16" viewBox="0 0 16 16"><defs><linearGradient id="gp" x1="0" y1="0" x2="1" y2="1"><stop offset="0" stop-color="#ffffff"/><stop offset=".55" stop-color="#dbe8f8"/><stop offset="1" stop-color="#8fb8ec"/></linearGradient></defs><path d="M3.5 1.5 H11.5 L14.5 4.5 V15.5 H3.5 Z" fill="url(#gp)" stroke="#6f93cc" stroke-width=".9"/><path d="M11.5 1.5 V4.5 H14.5" fill="#eaf2fb" stroke="#6f93cc" stroke-width=".7"/><rect x=".7" y=".7" width="8.4" height="8.4" fill="#fdf1f1" stroke="#a3262c" stroke-width="1.3"/><path d="M1.6 8.3 L3.8 5.4 L5.2 6.8 L6.3 5.8 L8.3 8.3 Z" fill="#a3262c"/><circle cx="4.2" cy="3.3" r="1" fill="#c23a40"/><path d="M6.5 10.5 L9.5 9.5 L10 11 Z" fill="#e8a33c"/></svg>
<span class="t" style="top:328px;line-height:16px;font-size:12px;color:#000;letter-spacing:0.224px;left:942px;">menu_company-off.gif</span>
<span class="t" style="top:328px;line-height:16px;font-size:12px;color:#6d6d6d;letter-spacing:-0.339px;left:1179px;">26/07/2003 17:24</span>
<span class="t" style="top:328px;line-height:16px;font-size:12px;color:#6d6d6d;letter-spacing:-0.521px;left:1339px;">Image GIF</span>
<span class="t" style="top:328px;line-height:16px;font-size:12px;color:#6d6d6d;letter-spacing:-0.200px;right:110px;">1 Ko</span>
<svg style="left:922px;top:348px;" width="16" height="16" viewBox="0 0 16 16"><defs><linearGradient id="gp" x1="0" y1="0" x2="1" y2="1"><stop offset="0" stop-color="#ffffff"/><stop offset=".55" stop-color="#dbe8f8"/><stop offset="1" stop-color="#8fb8ec"/></linearGradient></defs><path d="M3.5 1.5 H11.5 L14.5 4.5 V15.5 H3.5 Z" fill="url(#gp)" stroke="#6f93cc" stroke-width=".9"/><path d="M11.5 1.5 V4.5 H14.5" fill="#eaf2fb" stroke="#6f93cc" stroke-width=".7"/><rect x=".7" y=".7" width="8.4" height="8.4" fill="#fdf1f1" stroke="#a3262c" stroke-width="1.3"/><path d="M1.6 8.3 L3.8 5.4 L5.2 6.8 L6.3 5.8 L8.3 8.3 Z" fill="#a3262c"/><circle cx="4.2" cy="3.3" r="1" fill="#c23a40"/><path d="M6.5 10.5 L9.5 9.5 L10 11 Z" fill="#e8a33c"/></svg>
<span class="t" style="top:349px;line-height:16px;font-size:12px;color:#000;letter-spacing:0.244px;left:942px;">menu_home-off.gif</span>
<span class="t" style="top:349px;line-height:16px;font-size:12px;color:#6d6d6d;letter-spacing:-0.339px;left:1179px;">26/07/2003 17:24</span>
<span class="t" style="top:349px;line-height:16px;font-size:12px;color:#6d6d6d;letter-spacing:-0.521px;left:1339px;">Image GIF</span>
<span class="t" style="top:349px;line-height:16px;font-size:12px;color:#6d6d6d;letter-spacing:-0.200px;right:110px;">1 Ko</span>
<svg style="left:922px;top:369px;" width="16" height="16" viewBox="0 0 16 16"><defs><linearGradient id="gp" x1="0" y1="0" x2="1" y2="1"><stop offset="0" stop-color="#ffffff"/><stop offset=".55" stop-color="#dbe8f8"/><stop offset="1" stop-color="#8fb8ec"/></linearGradient></defs><path d="M3.5 1.5 H11.5 L14.5 4.5 V15.5 H3.5 Z" fill="url(#gp)" stroke="#6f93cc" stroke-width=".9"/><path d="M11.5 1.5 V4.5 H14.5" fill="#eaf2fb" stroke="#6f93cc" stroke-width=".7"/><rect x=".7" y=".7" width="8.4" height="8.4" fill="#fdf1f1" stroke="#a3262c" stroke-width="1.3"/><path d="M1.6 8.3 L3.8 5.4 L5.2 6.8 L6.3 5.8 L8.3 8.3 Z" fill="#a3262c"/><circle cx="4.2" cy="3.3" r="1" fill="#c23a40"/><path d="M6.5 10.5 L9.5 9.5 L10 11 Z" fill="#e8a33c"/></svg>
<span class="t" style="top:370px;line-height:16px;font-size:12px;color:#000;letter-spacing:0.075px;left:942px;">menu_shoppingcart.gif</span>
<span class="t" style="top:370px;line-height:16px;font-size:12px;color:#6d6d6d;letter-spacing:-0.339px;left:1179px;">26/07/2003 17:24</span>
<span class="t" style="top:370px;line-height:16px;font-size:12px;color:#6d6d6d;letter-spacing:-0.521px;left:1339px;">Image GIF</span>
<span class="t" style="top:370px;line-height:16px;font-size:12px;color:#6d6d6d;letter-spacing:-0.200px;right:110px;">1 Ko</span>
<svg style="left:922px;top:390px;" width="16" height="16" viewBox="0 0 16 16"><defs><linearGradient id="gp" x1="0" y1="0" x2="1" y2="1"><stop offset="0" stop-color="#ffffff"/><stop offset=".55" stop-color="#dbe8f8"/><stop offset="1" stop-color="#8fb8ec"/></linearGradient></defs><path d="M3.5 1.5 H11.5 L14.5 4.5 V15.5 H3.5 Z" fill="url(#gp)" stroke="#6f93cc" stroke-width=".9"/><path d="M11.5 1.5 V4.5 H14.5" fill="#eaf2fb" stroke="#6f93cc" stroke-width=".7"/><rect x=".7" y=".7" width="8.4" height="8.4" fill="#fdf1f1" stroke="#a3262c" stroke-width="1.3"/><path d="M1.6 8.3 L3.8 5.4 L5.2 6.8 L6.3 5.8 L8.3 8.3 Z" fill="#a3262c"/><circle cx="4.2" cy="3.3" r="1" fill="#c23a40"/><path d="M6.5 10.5 L9.5 9.5 L10 11 Z" fill="#e8a33c"/></svg>
<span class="t" style="top:391px;line-height:16px;font-size:12px;color:#000;letter-spacing:0.207px;left:942px;">menu_support-off.gif</span>
<span class="t" style="top:391px;line-height:16px;font-size:12px;color:#6d6d6d;letter-spacing:-0.339px;left:1179px;">26/07/2003 17:24</span>
<span class="t" style="top:391px;line-height:16px;font-size:12px;color:#6d6d6d;letter-spacing:-0.521px;left:1339px;">Image GIF</span>
<span class="t" style="top:391px;line-height:16px;font-size:12px;color:#6d6d6d;letter-spacing:-0.200px;right:110px;">1 Ko</span>
</div></div>
<div style="left:1592px;top:132px;width:16px;height:274px;background:linear-gradient(90deg,#e6e6e6,#f4f4f4 40%,#f1f1f1);"></div>
<svg style="left:1596px;top:138px;" width="7" height="4" viewBox="0 0 7 4"><path d="M0 4 H7 L3.5 0 Z" fill="#404040"/></svg>
<svg style="left:1596px;top:396px;" width="7" height="4" viewBox="0 0 7 4"><path d="M0 0 H7 L3.5 4 Z" fill="#404040"/></svg>
<div style="left:1593px;top:213px;width:14px;height:46px;border:1px solid #979797;border-radius:2px;background:linear-gradient(90deg,#f5f5f5,#e6e6e6 45%,#cfcfcf 55%,#d8d8d8);"></div>
<div style="left:1597px;top:234px;width:6px;height:1px;background:#6a6a6a;"></div>
<div style="left:1597px;top:236px;width:6px;height:1px;background:#6a6a6a;"></div>
<div style="left:1597px;top:238px;width:6px;height:1px;background:#6a6a6a;"></div>
<div style="left:903px;top:406px;width:689px;height:16px;background:linear-gradient(180deg,#e6e6e6,#f4f4f4 40%,#f1f1f1);"></div>
<svg style="left:909px;top:410px;" width="4" height="7" viewBox="0 0 4 7"><path d="M4 0 V7 L0 3.5 Z" fill="#404040"/></svg>
<svg style="left:1582px;top:410px;" width="4" height="7" viewBox="0 0 4 7"><path d="M0 0 V7 L4 3.5 Z" fill="#404040"/></svg>
<div style="left:922px;top:407px;width:615px;height:14px;border:1px solid #979797;border-radius:2px;background:linear-gradient(180deg,#f5f5f5,#e6e6e6 45%,#cfcfcf 55%,#d8d8d8);"></div>
<div style="left:1227px;top:411px;width:1px;height:6px;background:#6a6a6a;"></div>
<div style="left:1229px;top:411px;width:1px;height:6px;background:#6a6a6a;"></div>
<div style="left:1231px;top:411px;width:1px;height:6px;background:#6a6a6a;"></div>
<div style="left:1592px;top:406px;width:16px;height:16px;background:#f0f0f0;"></div>
<div style="left:744px;top:422px;width:864px;height:53px;background:linear-gradient(180deg,#f4f7fc,#eef2fa);border-top:1px solid #dfe5ee;"></div>
<div style="left:785px;top:435px;width:126px;height:23px;background:#fff;box-shadow:1px 1px 3px rgba(0,0,0,.45);"></div>
<span class="t" style="top:436px;line-height:22px;font-size:18px;color:#2a6cc4;letter-spacing:-0.077px;left:788px;">Got questions?</span>
<span class="t" style="top:430px;line-height:16px;font-size:13px;color:#000;letter-spacing:0.010px;left:1023px;">Got+questions%3F.png</span>
<span class="t" style="top:431px;line-height:16px;font-size:12px;color:#6a6f78;letter-spacing:-0.384px;left:1165px;">Prise de vue :</span>
<span class="t" style="top:431px;line-height:16px;font-size:12px;color:#1e3350;letter-spacing:-0.198px;left:1239px;">Spécifier la date de la prise</span>
<span class="t" style="top:448px;line-height:16px;font-size:12px;color:#6a6f78;letter-spacing:-0.304px;left:1023px;">Fichier PNG</span>
</div></body></html>
